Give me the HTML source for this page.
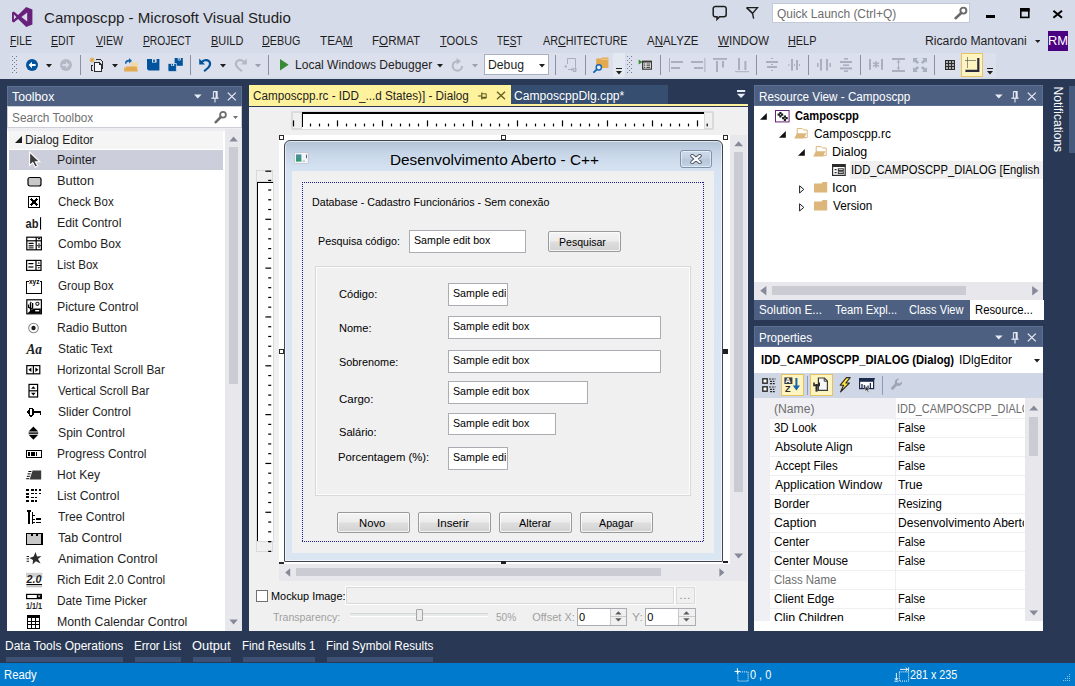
<!DOCTYPE html>
<html lang="en"><head><meta charset="utf-8"><title>Camposcpp - Microsoft Visual Studio</title>
<style>
html,body{margin:0;padding:0}
body{width:1075px;height:686px;overflow:hidden;position:relative;background:#293955;font-family:"Liberation Sans",sans-serif;font-size:12px}
#r{position:absolute;left:0;top:0;width:1075px;height:686px;overflow:hidden}
#r div,#r span,#r svg{position:absolute;box-sizing:content-box;white-space:nowrap}
#r span u{text-decoration:underline}
</style></head><body><div id="r">
<div style="left:0px;top:0px;width:1075px;height:79px;background:#d6dbe9;"></div>
<div style="left:10px;top:53px;width:603px;height:24px;background:#dce0ec;"></div>
<div style="left:613px;top:53px;width:12px;height:24px;background:#e4e8f1;"></div>
<div style="left:626px;top:53px;width:370px;height:24px;background:#dce0ec;"></div>
<span style="left:43.8px;top:8.30px;font-size:15px;line-height:19px;color:#1e1e1e;font-family:'Liberation Sans',sans-serif;transform-origin:0 0;transform:scaleX(1.0045);">Camposcpp - Microsoft Visual Studio</span>
<span style="left:10.22px;top:32.84px;font-size:12px;line-height:16px;color:#1e1e1e;font-family:'Liberation Sans',sans-serif;transform-origin:0 0;transform:scaleX(0.8661);"><u>F</u>ILE</span>
<span style="left:51.21px;top:32.84px;font-size:12px;line-height:16px;color:#1e1e1e;font-family:'Liberation Sans',sans-serif;transform-origin:0 0;transform:scaleX(0.8779);"><u>E</u>DIT</span>
<span style="left:96.0px;top:32.84px;font-size:12px;line-height:16px;color:#1e1e1e;font-family:'Liberation Sans',sans-serif;transform-origin:0 0;transform:scaleX(0.8824);"><u>V</u>IEW</span>
<span style="left:142.73px;top:32.84px;font-size:12px;line-height:16px;color:#1e1e1e;font-family:'Liberation Sans',sans-serif;transform-origin:0 0;transform:scaleX(0.8561);"><u>P</u>ROJECT</span>
<span style="left:210.68px;top:32.84px;font-size:12px;line-height:16px;color:#1e1e1e;font-family:'Liberation Sans',sans-serif;transform-origin:0 0;transform:scaleX(0.9145);"><u>B</u>UILD</span>
<span style="left:262.19px;top:32.84px;font-size:12px;line-height:16px;color:#1e1e1e;font-family:'Liberation Sans',sans-serif;transform-origin:0 0;transform:scaleX(0.8973);"><u>D</u>EBUG</span>
<span style="left:320.3px;top:32.84px;font-size:12px;line-height:16px;color:#1e1e1e;font-family:'Liberation Sans',sans-serif;transform-origin:0 0;transform:scaleX(0.9783);">TEA<u>M</u></span>
<span style="left:371.63px;top:32.84px;font-size:12px;line-height:16px;color:#1e1e1e;font-family:'Liberation Sans',sans-serif;transform-origin:0 0;transform:scaleX(0.9671);">F<u>O</u>RMAT</span>
<span style="left:439.81px;top:32.84px;font-size:12px;line-height:16px;color:#1e1e1e;font-family:'Liberation Sans',sans-serif;transform-origin:0 0;transform:scaleX(0.9296);"><u>T</u>OOLS</span>
<span style="left:497.33px;top:32.84px;font-size:12px;line-height:16px;color:#1e1e1e;font-family:'Liberation Sans',sans-serif;transform-origin:0 0;transform:scaleX(0.8278);">TE<u>S</u>T</span>
<span style="left:543.0px;top:32.84px;font-size:12px;line-height:16px;color:#1e1e1e;font-family:'Liberation Sans',sans-serif;transform-origin:0 0;transform:scaleX(0.8984);">AR<u>C</u>HITECTURE</span>
<span style="left:647.0px;top:32.84px;font-size:12px;line-height:16px;color:#1e1e1e;font-family:'Liberation Sans',sans-serif;transform-origin:0 0;transform:scaleX(0.9568);">A<u>N</u>ALYZE</span>
<span style="left:718.0px;top:32.84px;font-size:12px;line-height:16px;color:#1e1e1e;font-family:'Liberation Sans',sans-serif;transform-origin:0 0;transform:scaleX(0.9696);"><u>W</u>INDOW</span>
<span style="left:788.18px;top:32.84px;font-size:12px;line-height:16px;color:#1e1e1e;font-family:'Liberation Sans',sans-serif;transform-origin:0 0;transform:scaleX(0.9060);"><u>H</u>ELP</span>
<div style="left:772px;top:3px;width:196px;height:18px;background:#fff;border:1px solid #c4c9d8;"></div>
<span style="left:776.5px;top:5.84px;font-size:12px;line-height:16px;color:#6d6d6d;font-family:'Liberation Sans',sans-serif;transform-origin:0 0;transform:scaleX(0.9958);">Quick Launch (Ctrl+Q)</span>
<span style="left:925.09px;top:33.34px;font-size:12px;line-height:16px;color:#1e1e1e;font-family:'Liberation Sans',sans-serif;transform-origin:0 0;transform:scaleX(1.0163);">Ricardo Mantovani</span>
<div style="left:1048px;top:31px;width:20px;height:20px;background:#4b0082;"></div>
<span style="left:1047.91px;top:32.20px;font-size:13px;line-height:17px;color:#fff;font-family:'Liberation Sans',sans-serif;transform-origin:0 0;transform:scaleX(0.9945);">RM</span>
<span style="left:295.1px;top:56.84px;font-size:12px;line-height:16px;color:#1e1e1e;font-family:'Liberation Sans',sans-serif;transform-origin:0 0;transform:scaleX(1.0029);">Local Windows Debugger</span>
<div style="left:484.2px;top:54.4px;width:62.599999999999994px;height:18.6px;background:#fff;border:1px solid #a9afc0;"></div>
<span style="left:487.68px;top:56.84px;font-size:12px;line-height:16px;color:#1e1e1e;font-family:'Liberation Sans',sans-serif;transform-origin:0 0;transform:scaleX(1.0178);">Debug</span>
<div style="left:0px;top:662.5px;width:1075px;height:23.5px;background:#007acc;"></div>
<span style="left:3.66px;top:666.84px;font-size:12px;line-height:16px;color:#fff;font-family:'Liberation Sans',sans-serif;transform-origin:0 0;transform:scaleX(0.9379);">Ready</span>
<span style="left:750.34px;top:666.84px;font-size:12px;line-height:16px;color:#fff;font-family:'Liberation Sans',sans-serif;transform-origin:0 0;transform:scaleX(0.9115);">0 , 0</span>
<span style="left:909.76px;top:666.84px;font-size:12px;line-height:16px;color:#fff;font-family:'Liberation Sans',sans-serif;transform-origin:0 0;transform:scaleX(0.8953);">281 x 235</span>
<span style="left:5.1px;top:637.84px;font-size:12px;line-height:16px;color:#fff;font-family:'Liberation Sans',sans-serif;transform-origin:0 0;transform:scaleX(0.9983);">Data Tools Operations</span>
<div style="left:6px;top:657px;width:117px;height:5px;background:#3e5175;"></div>
<span style="left:134.13px;top:637.84px;font-size:12px;line-height:16px;color:#fff;font-family:'Liberation Sans',sans-serif;transform-origin:0 0;transform:scaleX(0.9644);">Error List</span>
<div style="left:135px;top:657px;width:46px;height:5px;background:#3e5175;"></div>
<span style="left:192.46px;top:637.84px;font-size:12px;line-height:16px;color:#fff;font-family:'Liberation Sans',sans-serif;transform-origin:0 0;transform:scaleX(1.0704);">Output</span>
<div style="left:193px;top:657px;width:38px;height:5px;background:#3e5175;"></div>
<span style="left:242.14px;top:637.84px;font-size:12px;line-height:16px;color:#fff;font-family:'Liberation Sans',sans-serif;transform-origin:0 0;transform:scaleX(0.9574);">Find Results 1</span>
<div style="left:243px;top:657px;width:72px;height:5px;background:#3e5175;"></div>
<span style="left:326.12px;top:637.84px;font-size:12px;line-height:16px;color:#fff;font-family:'Liberation Sans',sans-serif;transform-origin:0 0;transform:scaleX(0.9752);">Find Symbol Results</span>
<div style="left:327px;top:657px;width:106px;height:5px;background:#3e5175;"></div>
<div style="left:6.6px;top:86px;width:235.8px;height:545.2px;background:#fff;"></div>
<div style="left:6.6px;top:85.5px;width:235.8px;height:21.4px;background:#4d6082;box-shadow:inset 0 0 0 1px #5c7096"></div>
<span style="left:11.8px;top:88.84px;font-size:12px;line-height:16px;color:#fff;font-family:'Liberation Sans',sans-serif;transform-origin:0 0;transform:scaleX(1.0219);">Toolbox</span>
<div style="left:7px;top:107px;width:235.4px;height:24px;background:#eeeef2;"></div>
<div style="left:8px;top:107px;width:233.2px;height:20.4px;background:#fff;box-shadow:0 0 0 1px #ccced8"></div>
<span style="left:11.91px;top:109.84px;font-size:12px;line-height:16px;color:#717171;font-family:'Liberation Sans',sans-serif;transform-origin:0 0;transform:scaleX(0.9841);">Search Toolbox</span>
<div style="left:9px;top:130.7px;width:214px;height:18.3px;background:#f5f5f5;"></div>
<span style="left:25.1px;top:132.34px;font-size:12px;line-height:16px;color:#1e1e1e;font-family:'Liberation Sans',sans-serif;transform-origin:0 0;transform:scaleX(0.9985);">Dialog Editor</span>
<div style="left:9px;top:150px;width:214px;height:19.8px;background:#cccedb;"></div>
<span style="left:57.28px;top:152.34px;font-size:12px;line-height:16px;color:#1e1e1e;font-family:'Liberation Sans',sans-serif;transform-origin:0 0;transform:scaleX(1.0244);">Pointer</span>
<span style="left:57.24px;top:173.34px;font-size:12px;line-height:16px;color:#1e1e1e;font-family:'Liberation Sans',sans-serif;transform-origin:0 0;transform:scaleX(1.0697);">Button</span>
<span style="left:57.62px;top:194.34px;font-size:12px;line-height:16px;color:#1e1e1e;font-family:'Liberation Sans',sans-serif;transform-origin:0 0;transform:scaleX(0.9599);">Check Box</span>
<span style="left:57.27px;top:215.34px;font-size:12px;line-height:16px;color:#1e1e1e;font-family:'Liberation Sans',sans-serif;transform-origin:0 0;transform:scaleX(1.0279);">Edit Control</span>
<span style="left:57.6px;top:236.34px;font-size:12px;line-height:16px;color:#1e1e1e;font-family:'Liberation Sans',sans-serif;transform-origin:0 0;transform:scaleX(1.0048);">Combo Box</span>
<span style="left:57.33px;top:257.34px;font-size:12px;line-height:16px;color:#1e1e1e;font-family:'Liberation Sans',sans-serif;transform-origin:0 0;transform:scaleX(0.9640);">List Box</span>
<span style="left:57.62px;top:278.34px;font-size:12px;line-height:16px;color:#1e1e1e;font-family:'Liberation Sans',sans-serif;transform-origin:0 0;transform:scaleX(0.9700);">Group Box</span>
<span style="left:57.28px;top:299.34px;font-size:12px;line-height:16px;color:#1e1e1e;font-family:'Liberation Sans',sans-serif;transform-origin:0 0;transform:scaleX(1.0270);">Picture Control</span>
<span style="left:57.29px;top:320.34px;font-size:12px;line-height:16px;color:#1e1e1e;font-family:'Liberation Sans',sans-serif;transform-origin:0 0;transform:scaleX(1.0103);">Radio Button</span>
<span style="left:57.71px;top:341.34px;font-size:12px;line-height:16px;color:#1e1e1e;font-family:'Liberation Sans',sans-serif;transform-origin:0 0;transform:scaleX(0.9853);">Static Text</span>
<span style="left:57.31px;top:362.34px;font-size:12px;line-height:16px;color:#1e1e1e;font-family:'Liberation Sans',sans-serif;transform-origin:0 0;transform:scaleX(0.9861);">Horizontal Scroll Bar</span>
<span style="left:58.2px;top:383.34px;font-size:12px;line-height:16px;color:#1e1e1e;font-family:'Liberation Sans',sans-serif;transform-origin:0 0;transform:scaleX(0.9640);">Vertical Scroll Bar</span>
<span style="left:57.7px;top:404.34px;font-size:12px;line-height:16px;color:#1e1e1e;font-family:'Liberation Sans',sans-serif;transform-origin:0 0;transform:scaleX(1.0042);">Slider Control</span>
<span style="left:57.69px;top:425.34px;font-size:12px;line-height:16px;color:#1e1e1e;font-family:'Liberation Sans',sans-serif;transform-origin:0 0;transform:scaleX(1.0154);">Spin Control</span>
<span style="left:57.31px;top:446.34px;font-size:12px;line-height:16px;color:#1e1e1e;font-family:'Liberation Sans',sans-serif;transform-origin:0 0;transform:scaleX(0.9932);">Progress Control</span>
<span style="left:57.29px;top:467.34px;font-size:12px;line-height:16px;color:#1e1e1e;font-family:'Liberation Sans',sans-serif;transform-origin:0 0;transform:scaleX(1.0072);">Hot Key</span>
<span style="left:57.27px;top:488.34px;font-size:12px;line-height:16px;color:#1e1e1e;font-family:'Liberation Sans',sans-serif;transform-origin:0 0;transform:scaleX(1.0288);">List Control</span>
<span style="left:58.0px;top:509.34px;font-size:12px;line-height:16px;color:#1e1e1e;font-family:'Liberation Sans',sans-serif;transform-origin:0 0;transform:scaleX(1.0077);">Tree Control</span>
<span style="left:57.99px;top:530.34px;font-size:12px;line-height:16px;color:#1e1e1e;font-family:'Liberation Sans',sans-serif;transform-origin:0 0;transform:scaleX(1.0397);">Tab Control</span>
<span style="left:58.2px;top:551.34px;font-size:12px;line-height:16px;color:#1e1e1e;font-family:'Liberation Sans',sans-serif;transform-origin:0 0;transform:scaleX(1.0444);">Animation Control</span>
<span style="left:57.31px;top:572.34px;font-size:12px;line-height:16px;color:#1e1e1e;font-family:'Liberation Sans',sans-serif;transform-origin:0 0;transform:scaleX(0.9834);">Rich Edit 2.0 Control</span>
<span style="left:57.31px;top:593.34px;font-size:12px;line-height:16px;color:#1e1e1e;font-family:'Liberation Sans',sans-serif;transform-origin:0 0;transform:scaleX(0.9856);">Date Time Picker</span>
<span style="left:57.28px;top:614.34px;font-size:12px;line-height:16px;color:#1e1e1e;font-family:'Liberation Sans',sans-serif;transform-origin:0 0;transform:scaleX(1.0231);">Month Calendar Control</span>
<div style="left:225.3px;top:128.5px;width:17px;height:502.5px;background:#e8e8ec;"></div>
<div style="left:229px;top:147.2px;width:8.8px;height:237px;background:#cbccd3;"></div>
<div style="left:249px;top:85.2px;width:262px;height:20px;background:#fff29d;"></div>
<div style="left:249px;top:103.6px;width:499px;height:2.9px;background:#fff29d;"></div>
<span style="left:253.02px;top:87.94px;font-size:12px;line-height:16px;color:#1e1e1e;font-family:'Liberation Sans',sans-serif;transform-origin:0 0;transform:scaleX(0.9745);">Camposcpp.rc - IDD_...d States)] - Dialog</span>
<div style="left:511px;top:85.2px;width:157px;height:18.4px;background:#364e6f;"></div>
<span style="left:514.4px;top:87.94px;font-size:12px;line-height:16px;color:#fff;font-family:'Liberation Sans',sans-serif;transform-origin:0 0;transform:scaleX(1.0083);">CamposcppDlg.cpp*</span>
<div style="left:249px;top:106.5px;width:499px;height:524.8px;background:#f0f0f0;"></div>
<div style="left:291.5px;top:112.3px;width:421px;height:16.4px;background:#fff;box-shadow:0 0 0 0.6px #d0d0d0"></div>
<div style="left:302px;top:112.3px;width:402px;height:1.6px;background:#000;"></div>
<div style="left:301.8px;top:112.3px;width:1.5px;height:15px;background:#000;"></div>
<div style="left:291.5px;top:112.3px;width:8.5px;height:14.399999999999999px;background:#f0f0f0;border:1px solid #dadada;"></div>
<div style="left:704px;top:112.3px;width:6.6px;height:14.399999999999999px;background:#f0f0f0;border:1px solid #dadada;"></div>
<svg style="left:291.5px;top:112.3px;" width="421" height="17" viewBox="0 0 421 17"><rect x="17.90" y="11.60" width="1.2" height="2.8" fill="#000"/><rect x="26.90" y="11.60" width="1.2" height="2.8" fill="#000"/><rect x="35.90" y="11.60" width="1.2" height="2.8" fill="#000"/><rect x="44.90" y="8.40" width="1.2" height="6" fill="#000"/><rect x="53.90" y="11.60" width="1.2" height="2.8" fill="#000"/><rect x="62.90" y="11.60" width="1.2" height="2.8" fill="#000"/><rect x="71.90" y="11.60" width="1.2" height="2.8" fill="#000"/><rect x="80.90" y="11.60" width="1.2" height="2.8" fill="#000"/><rect x="89.90" y="8.40" width="1.2" height="6" fill="#000"/><rect x="98.90" y="11.60" width="1.2" height="2.8" fill="#000"/><rect x="107.90" y="11.60" width="1.2" height="2.8" fill="#000"/><rect x="116.90" y="11.60" width="1.2" height="2.8" fill="#000"/><rect x="125.90" y="11.60" width="1.2" height="2.8" fill="#000"/><rect x="134.90" y="8.40" width="1.2" height="6" fill="#000"/><rect x="143.90" y="11.60" width="1.2" height="2.8" fill="#000"/><rect x="152.90" y="11.60" width="1.2" height="2.8" fill="#000"/><rect x="161.90" y="11.60" width="1.2" height="2.8" fill="#000"/><rect x="170.90" y="11.60" width="1.2" height="2.8" fill="#000"/><rect x="179.90" y="8.40" width="1.2" height="6" fill="#000"/><rect x="188.90" y="11.60" width="1.2" height="2.8" fill="#000"/><rect x="197.90" y="11.60" width="1.2" height="2.8" fill="#000"/><rect x="206.90" y="11.60" width="1.2" height="2.8" fill="#000"/><rect x="215.90" y="11.60" width="1.2" height="2.8" fill="#000"/><rect x="224.90" y="8.40" width="1.2" height="6" fill="#000"/><rect x="233.90" y="11.60" width="1.2" height="2.8" fill="#000"/><rect x="242.90" y="11.60" width="1.2" height="2.8" fill="#000"/><rect x="251.90" y="11.60" width="1.2" height="2.8" fill="#000"/><rect x="260.90" y="11.60" width="1.2" height="2.8" fill="#000"/><rect x="269.90" y="8.40" width="1.2" height="6" fill="#000"/><rect x="278.90" y="11.60" width="1.2" height="2.8" fill="#000"/><rect x="287.90" y="11.60" width="1.2" height="2.8" fill="#000"/><rect x="296.90" y="11.60" width="1.2" height="2.8" fill="#000"/><rect x="305.90" y="11.60" width="1.2" height="2.8" fill="#000"/><rect x="314.90" y="8.40" width="1.2" height="6" fill="#000"/><rect x="323.90" y="11.60" width="1.2" height="2.8" fill="#000"/><rect x="332.90" y="11.60" width="1.2" height="2.8" fill="#000"/><rect x="341.90" y="11.60" width="1.2" height="2.8" fill="#000"/><rect x="350.90" y="11.60" width="1.2" height="2.8" fill="#000"/><rect x="359.90" y="8.40" width="1.2" height="6" fill="#000"/><rect x="368.90" y="11.60" width="1.2" height="2.8" fill="#000"/><rect x="377.90" y="11.60" width="1.2" height="2.8" fill="#000"/><rect x="386.90" y="11.60" width="1.2" height="2.8" fill="#000"/><rect x="395.90" y="11.60" width="1.2" height="2.8" fill="#000"/><rect x="404.90" y="8.40" width="1.2" height="6" fill="#000"/><rect x="0.9" y="8.4" width="1.2" height="6" fill="#000"/><rect x="414.6" y="11.6" width="1.2" height="2.8" fill="#000"/></svg>
<div style="left:279px;top:135px;width:451px;height:429px;background:#fff;"></div>
<div style="left:729.8px;top:135px;width:16.9px;height:446px;background:#e8e8ec;"></div>
<div style="left:734.3px;top:152px;width:8.7px;height:340px;background:#cbccd3;"></div>
<svg style="left:734px;top:141px;" width="10" height="6" viewBox="0 0 10 6"><path d="M0.2 5.2L4.6 0.2L9 5.2Z" fill="#868999"/></svg>
<svg style="left:734px;top:552.6px;" width="10" height="6" viewBox="0 0 10 6"><path d="M0.2 0.4L4.6 5.4L9 0.4Z" fill="#868999"/></svg>
<div style="left:279px;top:564px;width:451px;height:17px;background:#e8e8ec;"></div>
<div style="left:296px;top:568.3px;width:365px;height:8.2px;background:#cbccd3;"></div>
<svg style="left:285px;top:568px;" width="6" height="9" viewBox="0 0 6 9"><path d="M5.2 0.2V8.8L0.2 4.5Z" fill="#868999"/></svg>
<svg style="left:718.6px;top:568px;" width="6" height="9" viewBox="0 0 6 9"><path d="M0.4 0.2V8.8L5.4 4.5Z" fill="#868999"/></svg>
<div style="left:257px;top:181.8px;width:15.6px;height:359px;background:#fff;box-shadow:0 0 0 0.6px #d0d0d0"></div>
<div style="left:257px;top:181.8px;width:1.4px;height:359px;background:#000;"></div>
<div style="left:257px;top:181.6px;width:15.6px;height:1.3px;background:#000;"></div>
<div style="left:256.4px;top:170.3px;width:14.399999999999999px;height:9.5px;background:#f0f0f0;border:1px solid #dadada;"></div>
<div style="left:256.4px;top:540.7px;width:14.399999999999999px;height:9px;background:#f0f0f0;border:1px solid #dadada;"></div>
<svg style="left:257px;top:170px;" width="16" height="383" viewBox="0 0 16 383"><rect x="11.20" y="19.40" width="3" height="1.2" fill="#000"/><rect x="11.20" y="29.17" width="3" height="1.2" fill="#000"/><rect x="11.20" y="38.93" width="3" height="1.2" fill="#000"/><rect x="8.40" y="48.70" width="5.8" height="1.2" fill="#000"/><rect x="11.20" y="58.47" width="3" height="1.2" fill="#000"/><rect x="11.20" y="68.23" width="3" height="1.2" fill="#000"/><rect x="11.20" y="78.00" width="3" height="1.2" fill="#000"/><rect x="11.20" y="87.76" width="3" height="1.2" fill="#000"/><rect x="8.40" y="97.53" width="5.8" height="1.2" fill="#000"/><rect x="11.20" y="107.30" width="3" height="1.2" fill="#000"/><rect x="11.20" y="117.06" width="3" height="1.2" fill="#000"/><rect x="11.20" y="126.83" width="3" height="1.2" fill="#000"/><rect x="11.20" y="136.59" width="3" height="1.2" fill="#000"/><rect x="8.40" y="146.36" width="5.8" height="1.2" fill="#000"/><rect x="11.20" y="156.13" width="3" height="1.2" fill="#000"/><rect x="11.20" y="165.89" width="3" height="1.2" fill="#000"/><rect x="11.20" y="175.66" width="3" height="1.2" fill="#000"/><rect x="11.20" y="185.42" width="3" height="1.2" fill="#000"/><rect x="8.40" y="195.19" width="5.8" height="1.2" fill="#000"/><rect x="11.20" y="204.96" width="3" height="1.2" fill="#000"/><rect x="11.20" y="214.72" width="3" height="1.2" fill="#000"/><rect x="11.20" y="224.49" width="3" height="1.2" fill="#000"/><rect x="11.20" y="234.25" width="3" height="1.2" fill="#000"/><rect x="8.40" y="244.02" width="5.8" height="1.2" fill="#000"/><rect x="11.20" y="253.79" width="3" height="1.2" fill="#000"/><rect x="11.20" y="263.55" width="3" height="1.2" fill="#000"/><rect x="11.20" y="273.32" width="3" height="1.2" fill="#000"/><rect x="11.20" y="283.08" width="3" height="1.2" fill="#000"/><rect x="8.40" y="292.85" width="5.8" height="1.2" fill="#000"/><rect x="11.20" y="302.62" width="3" height="1.2" fill="#000"/><rect x="11.20" y="312.38" width="3" height="1.2" fill="#000"/><rect x="11.20" y="322.15" width="3" height="1.2" fill="#000"/><rect x="11.20" y="331.91" width="3" height="1.2" fill="#000"/><rect x="8.40" y="341.68" width="5.8" height="1.2" fill="#000"/><rect x="11.20" y="351.45" width="3" height="1.2" fill="#000"/><rect x="11.20" y="361.21" width="3" height="1.2" fill="#000"/><rect x="11.20" y="370.98" width="3" height="1.2" fill="#000"/><rect x="8.4" y="0.6" width="5.8" height="1.2" fill="#000"/><rect x="11.2" y="9.8" width="3" height="1.2" fill="#000"/><rect x="11.2" y="371" width="3" height="1.2" fill="#000"/><rect x="11.2" y="380.8" width="3" height="1.2" fill="#000"/></svg>
<div style="left:284.2px;top:140.2px;width:436.6px;height:419.6px;background:linear-gradient(#b3c4d7,#c9d8e9 14px,#d6e3f2 30px,#d9e5f3 60px,#dbe6f3);border:1px solid #3f4550;border-radius:6px 6px 1px 1px;box-shadow:inset 0 0 0 1px rgba(255,255,255,0.55)"></div>
<div style="left:292px;top:171px;width:421.7px;height:382px;background:#f0f0f0;"></div>
<span style="left:389.77px;top:150.30px;font-size:15px;line-height:19px;color:#000;font-family:'Liberation Sans',sans-serif;transform-origin:0 0;transform:scaleX(1.0227);">Desenvolvimento Aberto - C++</span>
<svg style="left:293.8px;top:152.3px;" width="15" height="12" viewBox="0 0 15 12"><defs><linearGradient id="tg" x1="0" y1="0" x2="0" y2="1"><stop offset="0" stop-color="#4f8ea8"/><stop offset="1" stop-color="#2f9a6a"/></linearGradient></defs><rect x="0.4" y="0.4" width="14" height="11.2" rx="1.2" fill="#f3f5f8" stroke="#b9c2cf" stroke-width="0.8"/><rect x="2" y="2.4" width="5.4" height="7.2" fill="url(#tg)"/><rect x="8.4" y="8.6" width="2.6" height="1" fill="#a8b0bc"/><rect x="12" y="2.6" width="1" height="3.6" fill="#5a6573"/></svg>
<div style="left:680.2px;top:150px;width:29.6px;height:15.8px;border:1px solid #7f92ab;border-radius:3px;background:linear-gradient(#cfdbe9,#bfcee0 50%,#b6c7db 50%,#c3d2e3);box-shadow:inset 0 0 0 1px rgba(255,255,255,0.5)"></div>
<svg style="left:689.5px;top:153.5px;" width="12" height="10" viewBox="0 0 12 10"><path d="M2.2 1.8L9.8 8.2M9.8 1.8L2.2 8.2" stroke="#47505e" stroke-width="3.8" stroke-linecap="round"/><path d="M2.2 1.8L9.8 8.2M9.8 1.8L2.2 8.2" stroke="#fff" stroke-width="2.1" stroke-linecap="round"/></svg>
<div style="left:278.8px;top:135px;width:3.2px;height:3.2px;background:#fff;border:1px solid #2b2b2b;"></div>
<div style="left:500.8px;top:135px;width:3.2px;height:3.2px;background:#fff;border:1px solid #2b2b2b;"></div>
<div style="left:723px;top:135px;width:3.2px;height:3.2px;background:#fff;border:1px solid #2b2b2b;"></div>
<div style="left:278.8px;top:348.8px;width:3.2px;height:3.2px;background:#fff;border:1px solid #2b2b2b;"></div>
<div style="left:723px;top:348.8px;width:5.2px;height:5.2px;background:#1e1e1e;"></div>
<div style="left:278.8px;top:562px;width:5.2px;height:2px;background:#2b2b2b;"></div>
<div style="left:500.8px;top:561.4px;width:5.2px;height:2.6px;background:#1e1e1e;"></div>
<div style="left:722.9px;top:561px;width:5.2px;height:2.4px;background:#1e1e1e;"></div>
<svg style="left:302px;top:182px;" width="403" height="361" viewBox="0 0 403 361"><g stroke="#1a1a8c" stroke-width="1" stroke-dasharray="1 1"><path d="M0 0.5H402"/><path d="M0 359.5H402"/><path d="M0.5 0V360"/><path d="M401.5 0V360"/></g></svg>
<span style="left:311.73px;top:194.69px;font-size:11px;line-height:15px;color:#000;font-family:'Liberation Sans',sans-serif;transform-origin:0 0;transform:scaleX(0.9708);">Database - Cadastro Funcionários - Sem conexão</span>
<span style="left:317.52px;top:233.69px;font-size:11px;line-height:15px;color:#000;font-family:'Liberation Sans',sans-serif;transform-origin:0 0;transform:scaleX(0.9780);">Pesquisa código:</span>
<div style="left:409px;top:230px;width:115px;height:21px;background:#fff;border:1px solid #abadb3;"></div>
<div style="left:414.02px;top:232.69px;width:110.0px;height:15px;overflow:hidden"><span style="left:0;top:0;font-size:11px;line-height:15px;color:#000;font-family:'Liberation Sans',sans-serif;transform-origin:0 0;transform:scaleX(0.9681);">Sample edit box</span></div>
<div style="left:548px;top:231.4px;width:71.2px;height:19px;border:1px solid #999a9a;border-radius:2px;background:linear-gradient(#f4f4f4,#ececec 48%,#dedede 52%,#d2d2d2);box-shadow:inset 0 0 0 1px rgba(255,255,255,0.75)"></div>
<span style="left:559.44px;top:235.09px;font-size:11px;line-height:15px;color:#000;font-family:'Liberation Sans',sans-serif;transform-origin:0 0;transform:scaleX(0.9582);">Pesquisar</span>
<div style="left:315px;top:266px;width:373.5px;height:227.5px;background:transparent;border:1px solid #d9d9d9;box-shadow:inset 0 0 0 1px rgba(255,255,255,0.8)"></div>
<span style="left:338.9px;top:287.39px;font-size:11px;line-height:15px;color:#000;font-family:'Liberation Sans',sans-serif;transform-origin:0 0;transform:scaleX(1.0082);">Código:</span>
<span style="left:338.5px;top:321.19px;font-size:11px;line-height:15px;color:#000;font-family:'Liberation Sans',sans-serif;transform-origin:0 0;transform:scaleX(1.0033);">Nome:</span>
<span style="left:338.91px;top:355.19px;font-size:11px;line-height:15px;color:#000;font-family:'Liberation Sans',sans-serif;transform-origin:0 0;transform:scaleX(0.9880);">Sobrenome:</span>
<span style="left:338.88px;top:391.69px;font-size:11px;line-height:15px;color:#000;font-family:'Liberation Sans',sans-serif;transform-origin:0 0;transform:scaleX(1.0411);">Cargo:</span>
<span style="left:338.9px;top:424.69px;font-size:11px;line-height:15px;color:#000;font-family:'Liberation Sans',sans-serif;transform-origin:0 0;transform:scaleX(1.0084);">Salário:</span>
<span style="left:338.47px;top:450.49px;font-size:11px;line-height:15px;color:#000;font-family:'Liberation Sans',sans-serif;transform-origin:0 0;transform:scaleX(1.0288);">Porcentagem (%):</span>
<div style="left:448.3px;top:283px;width:57.6px;height:21px;background:#fff;border:1px solid #abadb3;"></div>
<div style="left:453.32px;top:285.69px;width:52.6px;height:15px;overflow:hidden"><span style="left:0;top:0;font-size:11px;line-height:15px;color:#000;font-family:'Liberation Sans',sans-serif;transform-origin:0 0;transform:scaleX(0.9681);">Sample edit box</span></div>
<div style="left:448.3px;top:316.3px;width:211px;height:20.6px;background:#fff;border:1px solid #abadb3;"></div>
<div style="left:453.32px;top:318.99px;width:206.0px;height:15px;overflow:hidden"><span style="left:0;top:0;font-size:11px;line-height:15px;color:#000;font-family:'Liberation Sans',sans-serif;transform-origin:0 0;transform:scaleX(0.9681);">Sample edit box</span></div>
<div style="left:448.3px;top:350px;width:211px;height:20.8px;background:#fff;border:1px solid #abadb3;"></div>
<div style="left:453.32px;top:352.69px;width:206.0px;height:15px;overflow:hidden"><span style="left:0;top:0;font-size:11px;line-height:15px;color:#000;font-family:'Liberation Sans',sans-serif;transform-origin:0 0;transform:scaleX(0.9681);">Sample edit box</span></div>
<div style="left:448.3px;top:381.2px;width:137.4px;height:20.8px;background:#fff;border:1px solid #abadb3;"></div>
<div style="left:453.32px;top:383.89px;width:132.4px;height:15px;overflow:hidden"><span style="left:0;top:0;font-size:11px;line-height:15px;color:#000;font-family:'Liberation Sans',sans-serif;transform-origin:0 0;transform:scaleX(0.9681);">Sample edit box</span></div>
<div style="left:448.3px;top:413.3px;width:105.8px;height:20px;background:#fff;border:1px solid #abadb3;"></div>
<div style="left:453.32px;top:415.99px;width:100.8px;height:15px;overflow:hidden"><span style="left:0;top:0;font-size:11px;line-height:15px;color:#000;font-family:'Liberation Sans',sans-serif;transform-origin:0 0;transform:scaleX(0.9681);">Sample edit box</span></div>
<div style="left:448.3px;top:447px;width:57.6px;height:20.8px;background:#fff;border:1px solid #abadb3;"></div>
<div style="left:453.32px;top:449.69px;width:52.6px;height:15px;overflow:hidden"><span style="left:0;top:0;font-size:11px;line-height:15px;color:#000;font-family:'Liberation Sans',sans-serif;transform-origin:0 0;transform:scaleX(0.9681);">Sample edit box</span></div>
<div style="left:336.8px;top:512.4px;width:71.2px;height:18.6px;border:1px solid #999a9a;border-radius:2px;background:linear-gradient(#f4f4f4,#ececec 48%,#dedede 52%,#d2d2d2);box-shadow:inset 0 0 0 1px rgba(255,255,255,0.75)"></div>
<span style="left:359.08px;top:516.09px;font-size:11px;line-height:15px;color:#000;font-family:'Liberation Sans',sans-serif;transform-origin:0 0;transform:scaleX(1.0246);">Novo</span>
<div style="left:418px;top:512.4px;width:71px;height:18.6px;border:1px solid #999a9a;border-radius:2px;background:linear-gradient(#f4f4f4,#ececec 48%,#dedede 52%,#d2d2d2);box-shadow:inset 0 0 0 1px rgba(255,255,255,0.75)"></div>
<span style="left:437.35px;top:516.09px;font-size:11px;line-height:15px;color:#000;font-family:'Liberation Sans',sans-serif;transform-origin:0 0;transform:scaleX(1.0510);">Inserir</span>
<div style="left:499.2px;top:512.4px;width:71px;height:18.6px;border:1px solid #999a9a;border-radius:2px;background:linear-gradient(#f4f4f4,#ececec 48%,#dedede 52%,#d2d2d2);box-shadow:inset 0 0 0 1px rgba(255,255,255,0.75)"></div>
<span style="left:519.0px;top:516.09px;font-size:11px;line-height:15px;color:#000;font-family:'Liberation Sans',sans-serif;transform-origin:0 0;transform:scaleX(0.9938);">Alterar</span>
<div style="left:580px;top:512.4px;width:71px;height:18.6px;border:1px solid #999a9a;border-radius:2px;background:linear-gradient(#f4f4f4,#ececec 48%,#dedede 52%,#d2d2d2);box-shadow:inset 0 0 0 1px rgba(255,255,255,0.75)"></div>
<span style="left:599.0px;top:516.09px;font-size:11px;line-height:15px;color:#000;font-family:'Liberation Sans',sans-serif;transform-origin:0 0;transform:scaleX(0.9717);">Apagar</span>
<div style="left:255.5px;top:589.8px;width:10.2px;height:10.2px;background:#fff;border:1px solid #707070;"></div>
<span style="left:270.51px;top:589.29px;font-size:11px;line-height:15px;color:#000;font-family:'Liberation Sans',sans-serif;transform-origin:0 0;transform:scaleX(0.9905);">Mockup Image:</span>
<div style="left:346.4px;top:587px;width:325.2px;height:14.8px;background:#f0f0f0;border:1px solid #d9d9d9;box-shadow:0 0 0 1px #fff"></div>
<div style="left:675.5px;top:587.2px;width:17.2px;height:14.600000000000001px;background:#f0f0f0;border:1px solid #d9d9d9;box-shadow:0 0 0 1px #f8f8f8"></div>
<span style="left:272.81px;top:609.69px;font-size:11px;line-height:15px;color:#a0a0a0;font-family:'Liberation Sans',sans-serif;transform-origin:0 0;transform:scaleX(0.9607);">Transparency:</span>
<div style="left:350px;top:613px;width:138px;height:1px;background:#d6d6d6;"></div>
<div style="left:350px;top:614px;width:138px;height:1.6px;background:#e7eaea;"></div>
<div style="left:350px;top:615.6px;width:138px;height:0.8px;background:#fff;"></div>
<div style="left:415.6px;top:609px;width:5px;height:10.4px;background:#ececec;border:1px solid #a6a6a6;border-radius:1px"></div>
<span style="left:496.03px;top:609.69px;font-size:11px;line-height:15px;color:#a0a0a0;font-family:'Liberation Sans',sans-serif;transform-origin:0 0;transform:scaleX(0.9151);">50%</span>
<span style="left:532.2px;top:609.69px;font-size:11px;line-height:15px;color:#a0a0a0;font-family:'Liberation Sans',sans-serif;transform-origin:0 0;transform:scaleX(1.0000);">Offset X:</span>
<div style="left:577.2px;top:607.6px;width:48px;height:16px;background:#fff;border:1px solid #abadb3;"></div>
<span style="left:579.1px;top:609.69px;font-size:11px;line-height:15px;color:#000;font-family:'Liberation Sans',sans-serif;">0</span>
<span style="left:631.78px;top:609.69px;font-size:11px;line-height:15px;color:#a0a0a0;font-family:'Liberation Sans',sans-serif;transform-origin:0 0;transform:scaleX(1.1047);">Y:</span>
<div style="left:644.5px;top:607.6px;width:49px;height:16px;background:#fff;border:1px solid #abadb3;"></div>
<span style="left:647.3px;top:609.69px;font-size:11px;line-height:15px;color:#000;font-family:'Liberation Sans',sans-serif;">0</span>
<div style="left:753.8px;top:86px;width:289.7px;height:233.5px;background:#fff;"></div>
<div style="left:753.8px;top:85.3px;width:289.7px;height:21.1px;background:#4d6082;box-shadow:inset 0 0 0 1px #5c7096"></div>
<span style="left:758.62px;top:88.84px;font-size:12px;line-height:16px;color:#fff;font-family:'Liberation Sans',sans-serif;transform-origin:0 0;transform:scaleX(0.9753);">Resource View - Camposcpp</span>
<span style="left:794.63px;top:107.84px;font-size:12px;line-height:16px;color:#000;font-weight:bold;font-family:'Liberation Sans',sans-serif;transform-origin:0 0;transform:scaleX(0.9292);">Camposcpp</span>
<span style="left:813.9px;top:125.84px;font-size:12px;line-height:16px;color:#000;font-family:'Liberation Sans',sans-serif;transform-origin:0 0;transform:scaleX(0.9935);">Camposcpp.rc</span>
<span style="left:832.07px;top:143.84px;font-size:12px;line-height:16px;color:#000;font-family:'Liberation Sans',sans-serif;transform-origin:0 0;transform:scaleX(1.0372);">Dialog</span>
<div style="left:850px;top:161px;width:193px;height:18px;background:#f0f0f0;"></div>
<div style="left:850.67px;top:162.34px;width:191.3px;height:16px;overflow:hidden"><span style="left:0;top:0;font-size:12px;line-height:16px;color:#000;font-family:'Liberation Sans',sans-serif;transform-origin:0 0;transform:scaleX(0.9321);">IDD_CAMPOSCPP_DIALOG [English</span></div>
<span style="left:831.81px;top:180.34px;font-size:12px;line-height:16px;color:#000;font-family:'Liberation Sans',sans-serif;transform-origin:0 0;transform:scaleX(1.0817);">Icon</span>
<span style="left:833.0px;top:198.34px;font-size:12px;line-height:16px;color:#000;font-family:'Liberation Sans',sans-serif;transform-origin:0 0;transform:scaleX(0.9796);">Version</span>
<div style="left:753.8px;top:282px;width:289.7px;height:17.5px;background:#e8e8ec;"></div>
<div style="left:772px;top:286px;width:194px;height:9px;background:#cbccd3;"></div>
<div style="left:753.8px;top:299.5px;width:289.7px;height:20.1px;background:#4d6082;"></div>
<div style="left:970px;top:299.5px;width:73.5px;height:20.1px;background:#fff;"></div>
<span style="left:759.01px;top:301.64px;font-size:12px;line-height:16px;color:#fff;font-family:'Liberation Sans',sans-serif;transform-origin:0 0;transform:scaleX(0.9731);">Solution E...</span>
<span style="left:834.81px;top:301.64px;font-size:12px;line-height:16px;color:#fff;font-family:'Liberation Sans',sans-serif;transform-origin:0 0;transform:scaleX(0.9414);">Team Expl...</span>
<span style="left:908.95px;top:301.64px;font-size:12px;line-height:16px;color:#fff;font-family:'Liberation Sans',sans-serif;transform-origin:0 0;transform:scaleX(0.9215);">Class View</span>
<span style="left:974.65px;top:301.64px;font-size:12px;line-height:16px;color:#000;font-family:'Liberation Sans',sans-serif;transform-origin:0 0;transform:scaleX(0.9428);">Resource...</span>
<div style="left:754.4px;top:327px;width:289.1px;height:304px;background:#fff;"></div>
<div style="left:754.4px;top:326px;width:289.1px;height:21.4px;background:#4d6082;box-shadow:inset 0 0 0 1px #5c7096"></div>
<span style="left:758.93px;top:329.64px;font-size:12px;line-height:16px;color:#fff;font-family:'Liberation Sans',sans-serif;transform-origin:0 0;transform:scaleX(0.9682);">Properties</span>
<span style="left:760.95px;top:351.64px;font-size:12px;line-height:16px;color:#000;font-weight:bold;font-family:'Liberation Sans',sans-serif;transform-origin:0 0;transform:scaleX(0.9374);">IDD_CAMPOSCPP_DIALOG (Dialog)</span>
<span style="left:959.3px;top:351.84px;font-size:12px;line-height:16px;color:#000;font-family:'Liberation Sans',sans-serif;transform-origin:0 0;transform:scaleX(1.0039);">IDlgEditor</span>
<div style="left:754.4px;top:373px;width:289.1px;height:25px;background:#cfd6e5;"></div>
<div style="left:754.4px;top:398px;width:15.6px;height:223px;background:#f0f0f4;"></div>
<div style="left:770px;top:398px;width:124.5px;height:20.6px;background:#f0f0f4;"></div>
<span style="left:773.89px;top:401.14px;font-size:12px;line-height:16px;color:#6d6d6d;font-family:'Liberation Sans',sans-serif;transform-origin:0 0;transform:scaleX(1.0104);">(Name)</span>
<div style="left:897.4px;top:401.14px;width:126.3px;height:16px;overflow:hidden"><span style="left:0;top:0;font-size:12px;line-height:16px;color:#6d6d6d;font-family:'Liberation Sans',sans-serif;transform-origin:0 0;transform:scaleX(0.9080);">IDD_CAMPOSCPP_DIALOG</span></div>
<div style="left:770px;top:418.3px;width:255px;height:1px;background:#efeff2;"></div>
<span style="left:774.22px;top:420.09px;font-size:12px;line-height:16px;color:#000;font-family:'Liberation Sans',sans-serif;transform-origin:0 0;transform:scaleX(0.9527);">3D Look</span>
<div style="left:897.57px;top:420.09px;width:126.3px;height:16px;overflow:hidden"><span style="left:0;top:0;font-size:12px;line-height:16px;color:#000;font-family:'Liberation Sans',sans-serif;transform-origin:0 0;transform:scaleX(0.9250);">False</span></div>
<div style="left:770px;top:437.25px;width:255px;height:1px;background:#efeff2;"></div>
<span style="left:774.6px;top:439.04px;font-size:12px;line-height:16px;color:#000;font-family:'Liberation Sans',sans-serif;transform-origin:0 0;transform:scaleX(1.0199);">Absolute Align</span>
<div style="left:897.57px;top:439.04px;width:126.3px;height:16px;overflow:hidden"><span style="left:0;top:0;font-size:12px;line-height:16px;color:#000;font-family:'Liberation Sans',sans-serif;transform-origin:0 0;transform:scaleX(0.9250);">False</span></div>
<div style="left:770px;top:456.2px;width:255px;height:1px;background:#efeff2;"></div>
<span style="left:774.6px;top:457.99px;font-size:12px;line-height:16px;color:#000;font-family:'Liberation Sans',sans-serif;transform-origin:0 0;transform:scaleX(0.9600);">Accept Files</span>
<div style="left:897.57px;top:457.99px;width:126.3px;height:16px;overflow:hidden"><span style="left:0;top:0;font-size:12px;line-height:16px;color:#000;font-family:'Liberation Sans',sans-serif;transform-origin:0 0;transform:scaleX(0.9250);">False</span></div>
<div style="left:770px;top:475.15px;width:255px;height:1px;background:#efeff2;"></div>
<span style="left:774.6px;top:476.94px;font-size:12px;line-height:16px;color:#000;font-family:'Liberation Sans',sans-serif;transform-origin:0 0;transform:scaleX(1.0229);">Application Window</span>
<div style="left:898.2px;top:476.94px;width:126.3px;height:16px;overflow:hidden"><span style="left:0;top:0;font-size:12px;line-height:16px;color:#000;font-family:'Liberation Sans',sans-serif;transform-origin:0 0;transform:scaleX(1.0169);">True</span></div>
<div style="left:770px;top:494.1px;width:255px;height:1px;background:#efeff2;"></div>
<span style="left:773.71px;top:495.89px;font-size:12px;line-height:16px;color:#000;font-family:'Liberation Sans',sans-serif;transform-origin:0 0;transform:scaleX(0.9857);">Border</span>
<div style="left:897.54px;top:495.89px;width:126.3px;height:16px;overflow:hidden"><span style="left:0;top:0;font-size:12px;line-height:16px;color:#000;font-family:'Liberation Sans',sans-serif;transform-origin:0 0;transform:scaleX(0.9526);">Resizing</span></div>
<div style="left:770px;top:513.05px;width:255px;height:1px;background:#efeff2;"></div>
<span style="left:773.99px;top:514.84px;font-size:12px;line-height:16px;color:#000;font-family:'Liberation Sans',sans-serif;transform-origin:0 0;transform:scaleX(1.0225);">Caption</span>
<div style="left:897.5px;top:514.84px;width:126.3px;height:16px;overflow:hidden"><span style="left:0;top:0;font-size:12px;line-height:16px;color:#000;font-family:'Liberation Sans',sans-serif;transform-origin:0 0;transform:scaleX(1.0041);">Desenvolvimento Aberto - C++</span></div>
<div style="left:770px;top:532.0px;width:255px;height:1px;background:#efeff2;"></div>
<span style="left:774.01px;top:533.79px;font-size:12px;line-height:16px;color:#000;font-family:'Liberation Sans',sans-serif;transform-origin:0 0;transform:scaleX(0.9773);">Center</span>
<div style="left:897.57px;top:533.79px;width:126.3px;height:16px;overflow:hidden"><span style="left:0;top:0;font-size:12px;line-height:16px;color:#000;font-family:'Liberation Sans',sans-serif;transform-origin:0 0;transform:scaleX(0.9250);">False</span></div>
<div style="left:770px;top:550.95px;width:255px;height:1px;background:#efeff2;"></div>
<span style="left:774.01px;top:552.74px;font-size:12px;line-height:16px;color:#000;font-family:'Liberation Sans',sans-serif;transform-origin:0 0;transform:scaleX(0.9838);">Center Mouse</span>
<div style="left:897.57px;top:552.74px;width:126.3px;height:16px;overflow:hidden"><span style="left:0;top:0;font-size:12px;line-height:16px;color:#000;font-family:'Liberation Sans',sans-serif;transform-origin:0 0;transform:scaleX(0.9250);">False</span></div>
<div style="left:770px;top:569.9px;width:255px;height:1px;background:#efeff2;"></div>
<span style="left:774.03px;top:571.69px;font-size:12px;line-height:16px;color:#6d6d6d;font-family:'Liberation Sans',sans-serif;transform-origin:0 0;transform:scaleX(0.9549);">Class Name</span>
<div style="left:770px;top:588.85px;width:255px;height:1px;background:#efeff2;"></div>
<span style="left:774.02px;top:590.64px;font-size:12px;line-height:16px;color:#000;font-family:'Liberation Sans',sans-serif;transform-origin:0 0;transform:scaleX(0.9689);">Client Edge</span>
<div style="left:897.57px;top:590.64px;width:126.3px;height:16px;overflow:hidden"><span style="left:0;top:0;font-size:12px;line-height:16px;color:#000;font-family:'Liberation Sans',sans-serif;transform-origin:0 0;transform:scaleX(0.9250);">False</span></div>
<div style="left:770px;top:607.8px;width:255px;height:1px;background:#efeff2;"></div>
<span style="left:773.99px;top:609.59px;font-size:12px;line-height:16px;color:#000;font-family:'Liberation Sans',sans-serif;transform-origin:0 0;transform:scaleX(1.0163);">Clip Children</span>
<div style="left:897.57px;top:609.59px;width:126.3px;height:16px;overflow:hidden"><span style="left:0;top:0;font-size:12px;line-height:16px;color:#000;font-family:'Liberation Sans',sans-serif;transform-origin:0 0;transform:scaleX(0.9250);">False</span></div>
<div style="left:770px;top:626.75px;width:255px;height:1px;background:#efeff2;"></div>
<div style="left:894.5px;top:398px;width:1px;height:223px;background:#efeff2;"></div>
<div style="left:1025.3px;top:398px;width:17.7px;height:223px;background:#e8e8ec;"></div>
<div style="left:1029.4px;top:416.5px;width:8.6px;height:39px;background:#cbccd3;"></div>
<div style="left:754.4px;top:621px;width:289.1px;height:10px;background:#fff;"></div>
<div style="left:755px;top:631px;width:289px;height:31px;background:#293955;"></div>
<span style="left:0;top:0;font-size:13px;line-height:17px;color:#fff;transform-origin:0 0;transform:translate(1066.7px,86.6px) rotate(90deg) scaleX(0.9251)">Notifications</span>
<div style="left:1069px;top:85.5px;width:6px;height:67.5px;background:#465a7d;"></div>
<svg style="left:12px;top:7px;" width="21" height="20" viewBox="0 0 21 20"><path fill-rule="evenodd" fill="#68217a" d="M0 5.6L1.9 4.6L6.1 8L14.2 0L20.4 2.5V17.5L14.2 20L6.1 12L1.9 15.4L0 14.4Z M1.9 7.4V12.6L4.4 10Z M15.2 5.6V14.4L9.4 10Z"/></svg>
<svg style="left:12px;top:56px;" width="6" height="18" viewBox="0 0 6 18"><rect x="0" y="0" width="1" height="1" fill="#6d7a96"/><rect x="4" y="0" width="1" height="1" fill="#6d7a96"/><rect x="2" y="2" width="1" height="1" fill="#6d7a96"/><rect x="2" y="2" width="1" height="1" fill="#6d7a96"/><rect x="0" y="4" width="1" height="1" fill="#6d7a96"/><rect x="4" y="4" width="1" height="1" fill="#6d7a96"/><rect x="2" y="6" width="1" height="1" fill="#6d7a96"/><rect x="2" y="6" width="1" height="1" fill="#6d7a96"/><rect x="0" y="8" width="1" height="1" fill="#6d7a96"/><rect x="4" y="8" width="1" height="1" fill="#6d7a96"/><rect x="2" y="10" width="1" height="1" fill="#6d7a96"/><rect x="2" y="10" width="1" height="1" fill="#6d7a96"/><rect x="0" y="12" width="1" height="1" fill="#6d7a96"/><rect x="4" y="12" width="1" height="1" fill="#6d7a96"/><rect x="2" y="14" width="1" height="1" fill="#6d7a96"/><rect x="2" y="14" width="1" height="1" fill="#6d7a96"/><rect x="0" y="16" width="1" height="1" fill="#6d7a96"/><rect x="4" y="16" width="1" height="1" fill="#6d7a96"/></svg>
<svg style="left:26px;top:59px;" width="12" height="12" viewBox="0 0 12 12"><circle cx="6" cy="6" r="6" fill="#00539c"/><path d="M2.6 6L6 2.8V5H9.6V7H6V9.2Z" fill="#fff"/></svg>
<svg style="left:46px;top:64px;" width="6" height="4" viewBox="0 0 6 4"><path d="M0 0H6L3.0 3.5Z" fill="#1e1e1e"/></svg>
<svg style="left:60px;top:59px;" width="12" height="12" viewBox="0 0 12 12"><circle cx="6" cy="6" r="6" fill="#b3b8c4"/><path d="M9.4 6L6 2.8V5H2.4V7H6V9.2Z" fill="#d6dbe9"/></svg>
<div style="left:80px;top:55px;width:1px;height:20px;background:#8b92a6;"></div>
<svg style="left:89px;top:57px;" width="15" height="16" viewBox="0 0 15 16"><path d="M3 0.5V5.5M0.5 3H5.5M1.2 1.2L4.8 4.8M4.8 1.2L1.2 4.8" stroke="#e0a030" stroke-width="1"/>
<g shape-rendering="crispEdges"><path d="M6.5 2.5H11.5L13.5 4.5V11.5" fill="none" stroke="#2b2b2b" stroke-width="1"/>
<path d="M5.5 5.5H10.5L12.5 7.5V14.5H5.5Z" fill="#f4f6fb" stroke="#2b2b2b" stroke-width="1"/>
<path d="M10.5 5.5V7.5H12.5" fill="none" stroke="#2b2b2b" stroke-width="1"/>
<path d="M4 8.5H2.5V13.5H4" fill="none" stroke="#2b2b2b" stroke-width="1"/></g></svg>
<svg style="left:111.5px;top:64px;" width="6" height="4" viewBox="0 0 6 4"><path d="M0 0H6L3.0 3.5Z" fill="#1e1e1e"/></svg>
<svg style="left:124px;top:58px;" width="15" height="14" viewBox="0 0 15 14"><path d="M6.5 3.5H9.5L10.5 4.5H14V12.5H6.5Z" fill="#f0d9a8"/>
<path d="M0 13.5L2.2 8.6H12.6L13.8 13.5Z" fill="#e2a951"/><path d="M0 13.5V9.5H1.8Z" fill="#e2a951"/>
<path d="M1 5.8C1 2.6 3 1.8 5 1.8V0L8 2.8L5 5.6V3.8C3.6 3.8 2.6 4.2 2.4 5.8Z" fill="#1565b0"/></svg>
<svg style="left:147px;top:59px;" width="13" height="12" viewBox="0 0 13 12"><path d="M0 0H12.4V11.6H1.6L0 10Z" fill="#00539c"/><rect x="5" y="0" width="4.6" height="3.6" fill="#d6dbe9"/><rect x="6.2" y="0.6" width="1.6" height="2.4" fill="#00539c"/></svg>
<svg style="left:168px;top:58px;" width="15" height="14" viewBox="0 0 15 14"><path d="M6.6 0H14.8V7.8H6.6Z" fill="#00539c"/><rect x="9.8" y="0" width="3" height="2.4" fill="#d6dbe9"/><rect x="10.6" y="0.4" width="1" height="1.6" fill="#00539c"/>
<path d="M0 5.5H8.4V13.6H1.2L0 12.4Z" fill="#00539c" stroke="#d6dbe9" stroke-width="0.8"/><rect x="3.2" y="5.6" width="3" height="2.4" fill="#d6dbe9"/><rect x="4" y="6" width="1" height="1.6" fill="#00539c"/></svg>
<div style="left:190px;top:55px;width:1px;height:20px;background:#8b92a6;"></div>
<svg style="left:198.5px;top:57.6px;" width="13" height="14" viewBox="0 0 13 14"><g ><path d="M0.2 0.6V6.4H6L3.9 4.3C5.2 3.2 7.4 2.6 9 3.8C10.8 5.4 9.6 7.8 8.2 9.2L4.4 12.6L5.8 14L9.8 10.4C12.4 8 13.2 4.6 10.6 2.2C8 0 4.6 0.8 2.4 2.8Z" fill="#00539c"/></g></svg>
<svg style="left:220px;top:64px;" width="6" height="4" viewBox="0 0 6 4"><path d="M0 0H6L3.0 3.5Z" fill="#1e1e1e"/></svg>
<svg style="left:234px;top:57.6px;" width="13" height="14" viewBox="0 0 13 14"><g transform="translate(13,0) scale(-1,1)"><path d="M0.2 0.6V6.4H6L3.9 4.3C5.2 3.2 7.4 2.6 9 3.8C10.8 5.4 9.6 7.8 8.2 9.2L4.4 12.6L5.8 14L9.8 10.4C12.4 8 13.2 4.6 10.6 2.2C8 0 4.6 0.8 2.4 2.8Z" fill="#b3b8c4"/></g></svg>
<svg style="left:255px;top:64px;" width="6" height="4" viewBox="0 0 6 4"><path d="M0 0H6L3.0 3.5Z" fill="#9aa0ae"/></svg>
<div style="left:267.5px;top:55px;width:1px;height:20px;background:#8b92a6;"></div>
<svg style="left:280px;top:59px;" width="9" height="12" viewBox="0 0 9 12"><path d="M0 0L8.6 5.7L0 11.4Z" fill="#388a34"/></svg>
<svg style="left:437px;top:64px;" width="6" height="4" viewBox="0 0 6 4"><path d="M0 0H6L3.0 3.5Z" fill="#1e1e1e"/></svg>
<svg style="left:451.4px;top:57.6px;" width="13" height="15" viewBox="0 0 13 15"><path d="M6.4 3.2A4.7 4.7 0 1 0 11.1 7.9" fill="none" stroke="#b3b8c4" stroke-width="2.1"/><path d="M5.6 0L10 3.2L5.6 6.4Z" fill="#b3b8c4"/></svg>
<svg style="left:472px;top:64px;" width="6" height="4" viewBox="0 0 6 4"><path d="M0 0H6L3.0 3.5Z" fill="#9aa0ae"/></svg>
<svg style="left:539px;top:64px;" width="6" height="4" viewBox="0 0 6 4"><path d="M0 0H6L3.0 3.5Z" fill="#1e1e1e"/></svg>
<div style="left:555px;top:55px;width:1px;height:20px;background:#8b92a6;"></div>
<svg style="left:564px;top:58px;" width="13" height="14" viewBox="0 0 13 14"><path d="M3.5 6V0.5H11.5V13.5H9" fill="none" stroke="#a9afbf" stroke-width="1"/><path d="M3 8.5H0.8M0.8 8.5L2.4 7M0.8 8.5L2.4 10M4 11.5H9M9 11.5L7.4 10M9 11.5L7.4 13" stroke="#a9afbf" stroke-width="1" fill="none"/><rect x="9.5" y="10.5" width="2.6" height="2.6" fill="none" stroke="#a9afbf" stroke-width="0.8"/></svg>
<div style="left:585px;top:55px;width:1px;height:20px;background:#8b92a6;"></div>
<svg style="left:593px;top:57px;" width="16" height="16" viewBox="0 0 16 16"><path d="M3.2 1.6H8L9 0.6H15.4V11H3.2Z" fill="#e2a951"/><path d="M8.4 1.8H15.4V2.8H8.4Z" fill="#f0cf8e"/>
<circle cx="5.8" cy="10.4" r="2.6" fill="#e9eef8" stroke="#1565b0" stroke-width="1.4"/><path d="M3.8 12.4L1 15.2" stroke="#1565b0" stroke-width="1.8" stroke-linecap="round"/></svg>
<div style="left:616px;top:68px;width:6px;height:1.4px;background:#1e1e1e;"></div>
<svg style="left:616px;top:71px;" width="6" height="4" viewBox="0 0 6 4"><path d="M0 0H6L3.0 3.5Z" fill="#1e1e1e"/></svg>
<svg style="left:627px;top:56px;" width="6" height="18" viewBox="0 0 6 18"><rect x="0" y="0" width="1" height="1" fill="#6d7a96"/><rect x="4" y="0" width="1" height="1" fill="#6d7a96"/><rect x="2" y="2" width="1" height="1" fill="#6d7a96"/><rect x="2" y="2" width="1" height="1" fill="#6d7a96"/><rect x="0" y="4" width="1" height="1" fill="#6d7a96"/><rect x="4" y="4" width="1" height="1" fill="#6d7a96"/><rect x="2" y="6" width="1" height="1" fill="#6d7a96"/><rect x="2" y="6" width="1" height="1" fill="#6d7a96"/><rect x="0" y="8" width="1" height="1" fill="#6d7a96"/><rect x="4" y="8" width="1" height="1" fill="#6d7a96"/><rect x="2" y="10" width="1" height="1" fill="#6d7a96"/><rect x="2" y="10" width="1" height="1" fill="#6d7a96"/><rect x="0" y="12" width="1" height="1" fill="#6d7a96"/><rect x="4" y="12" width="1" height="1" fill="#6d7a96"/><rect x="2" y="14" width="1" height="1" fill="#6d7a96"/><rect x="2" y="14" width="1" height="1" fill="#6d7a96"/><rect x="0" y="16" width="1" height="1" fill="#6d7a96"/><rect x="4" y="16" width="1" height="1" fill="#6d7a96"/></svg>
<svg style="left:638px;top:59px;" width="15" height="12" viewBox="0 0 15 12"><path d="M0.6 0.4L4.6 3L0.6 5.6Z" fill="#388a34"/><path d="M4 1.6H14V10.8H4Z" fill="#3b3b3b"/><rect x="5.4" y="3.6" width="7.4" height="6" fill="#f6f6f6"/>
<path d="M6 5H7.4M8.4 5H12M6 6.8H7.4M8.4 6.8H12M6 8.6H7.4M8.4 8.6H12" stroke="#3b3b3b" stroke-width="1"/></svg>
<div style="left:660px;top:55px;width:1px;height:20px;background:#8b92a6;"></div>
<svg style="left:668px;top:57px;" width="16" height="16" viewBox="0 0 16 16"><rect x="1" y="1" width="1" height="14" fill="#a9afbf"/><rect x="3" y="4" width="12" height="2" fill="#a9afbf"/><rect x="3" y="10" width="9" height="2" fill="#a9afbf"/></svg>
<svg style="left:690px;top:57px;" width="16" height="16" viewBox="0 0 16 16"><rect x="14.4" y="1" width="1" height="14" fill="#a9afbf"/><rect x="1" y="4" width="12" height="2" fill="#a9afbf"/><rect x="4" y="10" width="9" height="2" fill="#a9afbf"/></svg>
<svg style="left:712px;top:57px;" width="16" height="16" viewBox="0 0 16 16"><rect x="1" y="1" width="14" height="1.8" fill="#a9afbf"/><rect x="4" y="4" width="2" height="11" fill="#a9afbf"/><rect x="10" y="4" width="2" height="6.5" fill="#a9afbf"/></svg>
<svg style="left:734px;top:57px;" width="16" height="16" viewBox="0 0 16 16"><rect x="1" y="14.2" width="14" height="1" fill="#a9afbf"/><rect x="4" y="1" width="2" height="12" fill="#a9afbf"/><rect x="10.4" y="4" width="2" height="9" fill="#a9afbf"/></svg>
<div style="left:756px;top:55px;width:1px;height:20px;background:#8b92a6;"></div>
<svg style="left:765px;top:57px;" width="14" height="16" viewBox="0 0 14 16"><rect x="1" y="4" width="12" height="2" fill="#a9afbf"/><rect x="2" y="9" width="10" height="2" fill="#a9afbf"/><rect x="6" y="1" width="2" height="1" fill="#a9afbf"/><rect x="6" y="7" width="2" height="1" fill="#a9afbf"/><rect x="6" y="13" width="2" height="1" fill="#a9afbf"/></svg>
<svg style="left:787px;top:57px;" width="14" height="16" viewBox="0 0 14 16"><rect x="4" y="2" width="2" height="11.6" fill="#a9afbf"/><rect x="9" y="3" width="2" height="10" fill="#a9afbf"/><rect x="1.4" y="7" width="1" height="2" fill="#a9afbf"/><rect x="7" y="7" width="1" height="2" fill="#a9afbf"/><rect x="12" y="7" width="1" height="2" fill="#a9afbf"/></svg>
<div style="left:808px;top:55px;width:1px;height:20px;background:#8b92a6;"></div>
<svg style="left:816px;top:57px;" width="16" height="16" viewBox="0 0 16 16"><rect x="1" y="6" width="1.6" height="4" fill="#a9afbf"/><rect x="4" y="2" width="2" height="11.6" fill="#a9afbf"/><rect x="10" y="2" width="2" height="11.6" fill="#a9afbf"/><rect x="13.4" y="6" width="1.6" height="4" fill="#a9afbf"/></svg>
<svg style="left:839px;top:57px;" width="14" height="16" viewBox="0 0 14 16"><rect x="5" y="1" width="4" height="1.6" fill="#a9afbf"/><rect x="1" y="4" width="12" height="2" fill="#a9afbf"/><rect x="4" y="7.4" width="6" height="1.6" fill="#a9afbf"/><rect x="1" y="10.4" width="12" height="2" fill="#a9afbf"/><rect x="5" y="13.4" width="4" height="1.6" fill="#a9afbf"/></svg>
<div style="left:860px;top:55px;width:1px;height:20px;background:#8b92a6;"></div>
<svg style="left:868px;top:57px;" width="16" height="16" viewBox="0 0 16 16"><rect x="1" y="2" width="2" height="10.8" fill="#a9afbf"/><rect x="13" y="2" width="2" height="10.8" fill="#a9afbf"/><path d="M8 4V11M5 5.6L11 9.4M11 5.6L5 9.4" stroke="#a9afbf" stroke-width="1.5"/></svg>
<svg style="left:891px;top:57px;" width="15" height="16" viewBox="0 0 15 16"><rect x="1" y="1" width="13" height="2" fill="#a9afbf"/><rect x="1" y="13" width="13" height="2" fill="#a9afbf"/><rect x="7" y="3" width="1" height="10" fill="#a9afbf"/><path d="M5.4 5.6L7.5 3.2L9.6 5.6ZM5.4 10.4L7.5 12.8L9.6 10.4Z" fill="#a9afbf"/></svg>
<svg style="left:912px;top:57px;" width="16" height="16" viewBox="0 0 16 16"><path d="M1 1H6L4.4 2.6L7 5.2L5.2 7L2.6 4.4L1 6ZM15 1V6L13.4 4.4L10.8 7L9 5.2L11.6 2.6L10 1ZM1 15V10L2.6 11.6L5.2 9L7 10.8L4.4 13.4L6 15ZM15 15H10L11.6 13.4L9 10.8L10.8 9L13.4 11.6L15 10Z" fill="#a9afbf"/></svg>
<div style="left:934px;top:55px;width:1px;height:20px;background:#8b92a6;"></div>
<svg style="left:945px;top:60px;" width="10" height="10" viewBox="0 0 10 10"><rect width="10" height="10" fill="#2b2b2b"/><rect x="1.2" y="1.2" width="1.6" height="1.6" fill="#f4f6fb"/><rect x="1.2" y="4.2" width="1.6" height="1.6" fill="#f4f6fb"/><rect x="1.2" y="7.2" width="1.6" height="1.6" fill="#f4f6fb"/><rect x="4.2" y="1.2" width="1.6" height="1.6" fill="#f4f6fb"/><rect x="4.2" y="4.2" width="1.6" height="1.6" fill="#f4f6fb"/><rect x="4.2" y="7.2" width="1.6" height="1.6" fill="#f4f6fb"/><rect x="7.2" y="1.2" width="1.6" height="1.6" fill="#f4f6fb"/><rect x="7.2" y="4.2" width="1.6" height="1.6" fill="#f4f6fb"/><rect x="7.2" y="7.2" width="1.6" height="1.6" fill="#f4f6fb"/></svg>
<div style="left:961px;top:53px;width:20px;height:22px;background:#fdf4bf;border:1px solid #e5c365;"></div>
<svg style="left:965px;top:57px;" width="15" height="16" viewBox="0 0 15 16"><path d="M12.2 1H14.4V15H0.4V12.8H12.2Z" fill="#2b2b3b"/><path d="M0.5 3.5H11" stroke="#2b2b3b" stroke-width="1" stroke-dasharray="1 1"/><path d="M2.5 0.5V11" stroke="#2b2b3b" stroke-width="1" stroke-dasharray="1 1"/></svg>
<div style="left:987px;top:68px;width:6px;height:1.4px;background:#1e1e1e;"></div>
<svg style="left:987px;top:71px;" width="6" height="4" viewBox="0 0 6 4"><path d="M0 0H6L3.0 3.5Z" fill="#1e1e1e"/></svg>
<svg style="left:712px;top:5px;" width="16" height="16" viewBox="0 0 16 16"><path d="M3.4 1.4H12A2.2 2.2 0 0 1 14.2 3.6V9.6A2.2 2.2 0 0 1 12 11.8H7.6L5 14.4V11.8H3.4A2.2 2.2 0 0 1 1.2 9.6V3.6A2.2 2.2 0 0 1 3.4 1.4Z" fill="none" stroke="#1e1e1e" stroke-width="1.5"/></svg>
<svg style="left:745px;top:6px;" width="14" height="14" viewBox="0 0 14 14"><path d="M1.6 1.6H12.4L7.6 7.4L8.6 12.6" fill="none" stroke="#1e1e1e" stroke-width="1.4"/><path d="M1.6 1.6L7.6 7.4" stroke="#1e1e1e" stroke-width="1.6"/></svg>
<svg style="left:953px;top:5px;" width="16" height="16" viewBox="0 0 16 16"><circle cx="10.4" cy="5.6" r="3" fill="none" stroke="#6a6a6a" stroke-width="1.9"/><path d="M8.2 8L2.6 13.2" stroke="#6a6a6a" stroke-width="2.6" stroke-linecap="round"/></svg>
<div style="left:986px;top:14.7px;width:9.2px;height:3.6px;background:#000;"></div>
<svg style="left:1020px;top:8px;" width="10" height="11" viewBox="0 0 10 11"><rect x="0.8" y="0.8" width="8" height="8.6" fill="none" stroke="#000" stroke-width="1.6"/><rect x="0" y="0.6" width="9.6" height="3" fill="#000"/></svg>
<svg style="left:1052px;top:10px;" width="12" height="9" viewBox="0 0 12 9"><path d="M1.4 0.8L10 7.8M10 0.8L1.4 7.8" stroke="#000" stroke-width="2"/></svg>
<svg style="left:1034.5px;top:40px;" width="5.5" height="3.6" viewBox="0 0 5.5 3.6"><path d="M0 0H5.5L2.75 3.1Z" fill="#1e1e1e"/></svg>
<svg style="left:194.0px;top:94px;" width="8" height="5" viewBox="0 0 8 5"><path d="M0 0.4H7.6L3.8 4.4Z" fill="#e8ecf4"/></svg>
<svg style="left:210.5px;top:91px;" width="8" height="12" viewBox="0 0 8 12"><path d="M2.4 0.6H6V7" fill="none" stroke="#e8ecf4" stroke-width="1.2"/><path d="M2.4 0.6V7" stroke="#e8ecf4" stroke-width="1"/><path d="M5.4 0.6V7" stroke="#e8ecf4" stroke-width="1.6"/><path d="M0.4 7.2H7.6" stroke="#e8ecf4" stroke-width="1.2"/><path d="M4 7.2V11.6" stroke="#e8ecf4" stroke-width="1.1"/></svg>
<svg style="left:226.5px;top:92px;" width="10" height="9" viewBox="0 0 10 9"><path d="M0.8 0.6L8.8 8.4M8.8 0.6L0.8 8.4" stroke="#e8ecf4" stroke-width="1.3"/></svg>
<svg style="left:994.5px;top:94px;" width="8" height="5" viewBox="0 0 8 5"><path d="M0 0.4H7.6L3.8 4.4Z" fill="#e8ecf4"/></svg>
<svg style="left:1011px;top:91px;" width="8" height="12" viewBox="0 0 8 12"><path d="M2.4 0.6H6V7" fill="none" stroke="#e8ecf4" stroke-width="1.2"/><path d="M2.4 0.6V7" stroke="#e8ecf4" stroke-width="1"/><path d="M5.4 0.6V7" stroke="#e8ecf4" stroke-width="1.6"/><path d="M0.4 7.2H7.6" stroke="#e8ecf4" stroke-width="1.2"/><path d="M4 7.2V11.6" stroke="#e8ecf4" stroke-width="1.1"/></svg>
<svg style="left:1027px;top:92px;" width="10" height="9" viewBox="0 0 10 9"><path d="M0.8 0.6L8.8 8.4M8.8 0.6L0.8 8.4" stroke="#e8ecf4" stroke-width="1.3"/></svg>
<svg style="left:994.5px;top:334.6px;" width="8" height="5" viewBox="0 0 8 5"><path d="M0 0.4H7.6L3.8 4.4Z" fill="#e8ecf4"/></svg>
<svg style="left:1011px;top:331.6px;" width="8" height="12" viewBox="0 0 8 12"><path d="M2.4 0.6H6V7" fill="none" stroke="#e8ecf4" stroke-width="1.2"/><path d="M2.4 0.6V7" stroke="#e8ecf4" stroke-width="1"/><path d="M5.4 0.6V7" stroke="#e8ecf4" stroke-width="1.6"/><path d="M0.4 7.2H7.6" stroke="#e8ecf4" stroke-width="1.2"/><path d="M4 7.2V11.6" stroke="#e8ecf4" stroke-width="1.1"/></svg>
<svg style="left:1027px;top:332.6px;" width="10" height="9" viewBox="0 0 10 9"><path d="M0.8 0.6L8.8 8.4M8.8 0.6L0.8 8.4" stroke="#e8ecf4" stroke-width="1.3"/></svg>
<svg style="left:478px;top:92px;" width="9" height="8" viewBox="0 0 9 8"><path d="M0 4H3.6" stroke="#5f5a22" stroke-width="1.1"/><path d="M3.8 0.6V7.4" stroke="#5f5a22" stroke-width="1.2"/><path d="M3.8 1.8H8.2V6H3.8" fill="none" stroke="#5f5a22" stroke-width="1"/><path d="M3.8 5.6H8.2" stroke="#5f5a22" stroke-width="1.6"/></svg>
<svg style="left:496px;top:91px;" width="10" height="9" viewBox="0 0 10 9"><path d="M1 0.8L9 8.2M9 0.8L1 8.2" stroke="#5f5a22" stroke-width="1.3"/></svg>
<svg style="left:736.8px;top:90px;" width="9" height="9" viewBox="0 0 9 9"><rect x="0" y="0" width="8.2" height="2" fill="#e8ecf4"/><path d="M0 3.8H8.2L4.1 8Z" fill="#e8ecf4"/></svg>
<svg style="left:213px;top:108px;" width="16" height="16" viewBox="0 0 16 16"><circle cx="10" cy="6.7" r="2.9" fill="none" stroke="#6d6d6d" stroke-width="1.8"/><path d="M7.8 9L2.8 14.2" stroke="#6d6d6d" stroke-width="2.6" stroke-linecap="round"/></svg>
<svg style="left:232.5px;top:116px;" width="5" height="3.4" viewBox="0 0 5 3.4"><path d="M0 0H5L2.5 2.9Z" fill="#717171"/></svg>
<svg style="left:26px;top:152px;overflow:visible;" width="17" height="16" viewBox="0 0 17 16"><path d="M3.6 0V13.4L6.8 10.6L9.2 15.2L11.6 14L9.4 9.8H13.8Z" fill="#3b3b3b" stroke="#fff" stroke-width="1.1"/></svg>
<svg style="left:26px;top:173px;overflow:visible;" width="17" height="16" viewBox="0 0 17 16"><rect x="2" y="4.5" width="13" height="8.5" fill="#c8c8c8" stroke="#000" stroke-width="1.2" rx="2"/></svg>
<svg style="left:26px;top:194px;overflow:visible;" width="17" height="16" viewBox="0 0 17 16"><g shape-rendering="crispEdges"><rect x="2.5" y="2.5" width="11" height="11" fill="#fff" stroke="#000" stroke-width="1.3" rx="0"/><path d="M4.8 4.8L11.2 11.2M11.2 4.8L4.8 11.2" fill="none" stroke="#000" stroke-width="2.4"/></g></svg>
<svg style="left:26px;top:215px;overflow:visible;" width="17" height="16" viewBox="0 0 17 16"><text x="-0.5" y="12.6" font-family="Liberation Sans,sans-serif" font-weight="bold" font-size="12" fill="#1e1e1e" textLength="13" lengthAdjust="spacingAndGlyphs">ab</text><rect x="14" y="2.2" width="1.1" height="12.4" fill="#000"/></svg>
<svg style="left:26px;top:236px;overflow:visible;" width="17" height="16" viewBox="0 0 17 16"><rect x="0.8" y="1.2" width="14.6" height="12.6" fill="#fff" stroke="#000" stroke-width="1.2" rx="0"/><rect x="0.8" y="4.2" width="14.6" height="1.2" fill="#000"/><rect x="9.6" y="1.2" width="1.2" height="12.6" fill="#000"/><rect x="2.6" y="6.8" width="5" height="1.2" fill="#000"/><rect x="2.6" y="9.2" width="5" height="1.2" fill="#000"/><rect x="2.6" y="11.4" width="5" height="1" fill="#000"/><path d="M11.6 2H14.4L13 3.8Z" fill="#000" stroke="none" stroke-width="1"/><path d="M11.8 8.6L13 7L14.2 8.6Z" fill="#000" stroke="none" stroke-width="1"/><path d="M11.8 10.6L13 12.2L14.2 10.6Z" fill="#000" stroke="none" stroke-width="1"/><rect x="10.8" y="9.3" width="4.4" height="0.8" fill="#000"/></svg>
<svg style="left:26px;top:257px;overflow:visible;" width="17" height="16" viewBox="0 0 17 16"><rect x="0.6" y="3.4" width="14.4" height="10" fill="#fff" stroke="#000" stroke-width="1.2" rx="0"/><rect x="9.4" y="3.4" width="1.2" height="10" fill="#000"/><rect x="2.4" y="6" width="5" height="1.2" fill="#000"/><rect x="2.4" y="9.4" width="5" height="1.2" fill="#000"/><rect x="10.6" y="8" width="4.4" height="1" fill="#000"/><path d="M11.6 6.6L12.8 5L14 6.6Z" fill="#000" stroke="none" stroke-width="1"/><path d="M11.6 10.2L12.8 11.8L14 10.2Z" fill="#000" stroke="none" stroke-width="1"/></svg>
<svg style="left:26px;top:278px;overflow:visible;" width="17" height="16" viewBox="0 0 17 16"><g shape-rendering="crispEdges"><path d="M2.6 3.6H0.8V15.2H15.4V3.6H13.8" fill="none" stroke="#000" stroke-width="1.2"/><text x="3" y="5.6" font-family="Liberation Sans,sans-serif" font-weight="bold" font-size="8" fill="#000" textLength="10.4" lengthAdjust="spacingAndGlyphs">xyz</text></g></svg>
<svg style="left:26px;top:299px;overflow:visible;" width="17" height="16" viewBox="0 0 17 16"><rect x="0.8" y="0.8" width="14.6" height="14" fill="#fff" stroke="#000" stroke-width="1.2" rx="0"/><path d="M4.6 13V6.2M4.6 9.4L2.6 8.4V5.6M4.6 10.6L6.6 9V4M4.6 6.4C4 4 5.2 3 5.2 3" fill="none" stroke="#000" stroke-width="1.3"/><circle cx="11.4" cy="4.8" r="1.6" fill="none" stroke="#1e1e1e" stroke-width="1.1"/><path d="M1 14.4L7.4 9.6H14.8V14.4Z" fill="#000" stroke="none" stroke-width="1"/><rect x="9.2" y="11" width="4" height="1.4" fill="#fff"/></svg>
<svg style="left:26px;top:320px;overflow:visible;" width="17" height="16" viewBox="0 0 17 16"><circle cx="7.5" cy="8" r="4.8" fill="#fff" stroke="#8a8a8a" stroke-width="1.1"/><circle cx="7.5" cy="8" r="2.2" fill="#1e1e1e"/></svg>
<svg style="left:26px;top:341px;overflow:visible;" width="17" height="16" viewBox="0 0 17 16"><text x="0.4" y="13.4" font-family="Liberation Serif,serif" font-style="italic" font-weight="bold" font-size="14" fill="#1e1e1e" textLength="15.6" lengthAdjust="spacingAndGlyphs">Aa</text></svg>
<svg style="left:26px;top:362px;overflow:visible;" width="17" height="16" viewBox="0 0 17 16"><rect x="0.8" y="3.6" width="13" height="8.2" fill="#fff" stroke="#000" stroke-width="1.2" rx="0"/><rect x="6.8" y="3.6" width="1.2" height="8.2" fill="#000"/><path d="M5.4 5.4V10L2.4 7.7Z" fill="#000" stroke="none" stroke-width="1"/><path d="M9.4 5.4V10L12.4 7.7Z" fill="#000" stroke="none" stroke-width="1"/></svg>
<svg style="left:26px;top:383px;overflow:visible;" width="17" height="16" viewBox="0 0 17 16"><rect x="3" y="1.4" width="8.6" height="12.6" fill="#fff" stroke="#000" stroke-width="1.2" rx="0"/><rect x="3" y="7.2" width="8.6" height="1.2" fill="#000"/><path d="M5 5.8H9.6L7.3 3.2Z" fill="#000" stroke="none" stroke-width="1"/><path d="M5 9.8H9.6L7.3 12.4Z" fill="#000" stroke="none" stroke-width="1"/></svg>
<svg style="left:26px;top:404px;overflow:visible;" width="17" height="16" viewBox="0 0 17 16"><g shape-rendering="crispEdges"><rect x="0.6" y="7.4" width="14.6" height="1.3" fill="#000"/><rect x="3.6" y="4.2" width="3.4" height="7.8" fill="#fff" stroke="#000" stroke-width="1.3" rx="1"/><rect x="14" y="7.4" width="1.2" height="3.2" fill="#000"/><rect x="1.6" y="5.8" width="1" height="4.6" fill="#000"/></g></svg>
<svg style="left:26px;top:425px;overflow:visible;" width="17" height="16" viewBox="0 0 17 16"><path d="M2.6 6.4H12.2L7.4 1.4Z" fill="#000" stroke="none" stroke-width="1"/><rect x="2.6" y="7.4" width="9.6" height="1.4" fill="#000"/><path d="M2.6 9.8H12.2L7.4 14.8Z" fill="#000" stroke="none" stroke-width="1"/></svg>
<svg style="left:26px;top:446px;overflow:visible;" width="17" height="16" viewBox="0 0 17 16"><g shape-rendering="crispEdges"><rect x="0.4" y="4.6" width="14.8" height="7.2" fill="#fff" stroke="#000" stroke-width="1.3" rx="0"/><rect x="1.8" y="6" width="2" height="4.4" fill="#000"/><rect x="4.6" y="6" width="2" height="4.4" fill="#000"/><rect x="7.4" y="6" width="2" height="4.4" fill="#000"/><rect x="10.2" y="6" width="1.2" height="4.4" fill="#000"/></g></svg>
<svg style="left:26px;top:467px;overflow:visible;" width="17" height="16" viewBox="0 0 17 16"><path d="M6.6 3.4H15.2V12.4H3.6Z" fill="#3b3b3b" stroke="none" stroke-width="1"/><rect x="2.4" y="4" width="3" height="1" fill="#000"/><rect x="1.6" y="6.4" width="3" height="1" fill="#000"/><rect x="0.8" y="8.8" width="3" height="1" fill="#000"/><rect x="0.2" y="11.2" width="3" height="1" fill="#000"/></svg>
<svg style="left:26px;top:488px;overflow:visible;" width="17" height="16" viewBox="0 0 17 16"><g shape-rendering="crispEdges"><rect x="0.4" y="1.0" width="3" height="2.2" fill="#000"/><rect x="5.4" y="1.4" width="2.2" height="1.4" fill="#000"/><rect x="9.2" y="1.4" width="2.2" height="1.4" fill="#000"/><rect x="13" y="1.4" width="1.6" height="1.4" fill="#000"/><rect x="0.4" y="4.6" width="3" height="2.2" fill="#000"/><rect x="5.4" y="5.0" width="2.2" height="1.4" fill="#000"/><rect x="9.2" y="5.0" width="2.2" height="1.4" fill="#000"/><rect x="13" y="5.0" width="1.6" height="1.4" fill="#000"/><rect x="0.4" y="8.2" width="3" height="2.2" fill="#000"/><rect x="5.4" y="8.6" width="2.2" height="1.4" fill="#000"/><rect x="9.2" y="8.6" width="2.2" height="1.4" fill="#000"/><rect x="0.4" y="11.8" width="3" height="2.2" fill="#000"/><rect x="5.4" y="12.200000000000001" width="2.2" height="1.4" fill="#000"/><rect x="9.2" y="12.200000000000001" width="2.2" height="1.4" fill="#000"/></g></svg>
<svg style="left:26px;top:509px;overflow:visible;" width="17" height="16" viewBox="0 0 17 16"><g shape-rendering="crispEdges"><rect x="0.8" y="1" width="4" height="1.6" fill="#000"/><rect x="2.2" y="1" width="1.4" height="14" fill="#000"/><rect x="6" y="3.2" width="1.4" height="11.6" fill="#000"/><rect x="6" y="6" width="3.4" height="1.3" fill="#000"/><rect x="6" y="9.6" width="3.4" height="1.3" fill="#000"/><rect x="6" y="13" width="3.4" height="1.3" fill="#000"/><rect x="10.4" y="9.4" width="4.6" height="1.6" fill="#000"/><rect x="10.4" y="12.8" width="4.6" height="1.6" fill="#000"/></g></svg>
<svg style="left:26px;top:530px;overflow:visible;" width="17" height="16" viewBox="0 0 17 16"><g shape-rendering="crispEdges"><path d="M0.4 14.4V3.2H5.2V5.2H6.2V3.2H10.6V5.2H11.6V3.2H16V14.4Z" fill="#c8c8c8" stroke="#000" stroke-width="1.2"/></g></svg>
<svg style="left:26px;top:551px;overflow:visible;" width="17" height="16" viewBox="0 0 17 16"><path d="M9.6 1L11 5.6L15.4 5L12 8L14.6 12.4L9.8 10.2L6.6 13.6L7 9L3.4 7L7.6 5.6Z" fill="#2b2b2b" stroke="none" stroke-width="1"/><rect x="0.6" y="5" width="2.4" height="0.9" fill="#000"/><rect x="0.6" y="7.4" width="2.4" height="0.9" fill="#000"/><rect x="0.6" y="9.8" width="2.4" height="0.9" fill="#000"/></svg>
<svg style="left:26px;top:572px;overflow:visible;" width="17" height="16" viewBox="0 0 17 16"><rect x="0" y="0.8" width="16.4" height="4.6" fill="#d0d0d0"/><text x="0.6" y="10.8" font-family="Liberation Sans,sans-serif" font-style="italic" font-weight="bold" font-size="10" fill="#1e1e1e" textLength="15" lengthAdjust="spacingAndGlyphs">2.0</text><rect x="0.4" y="12" width="15.6" height="1.2" fill="#000"/><rect x="0.4" y="14.4" width="15.6" height="0.8" fill="#9a9a9a"/></svg>
<svg style="left:26px;top:593px;overflow:visible;" width="17" height="16" viewBox="0 0 17 16"><rect x="0.6" y="1.4" width="14.8" height="4.2" fill="#fff" stroke="#000" stroke-width="1.2" rx="0"/><rect x="10.8" y="1.4" width="4.6" height="4.2" fill="#000"/><path d="M11.8 2.6H14.4L13.1 4.4Z" fill="#fff" stroke="none" stroke-width="1"/><text x="0" y="15.6" font-family="Liberation Sans,sans-serif" font-weight="bold" font-size="9" fill="#1e1e1e" textLength="16" lengthAdjust="spacingAndGlyphs">1/1/1</text></svg>
<svg style="left:26px;top:614px;overflow:visible;" width="17" height="16" viewBox="0 0 17 16"><g shape-rendering="crispEdges"><rect x="1.8" y="1.6" width="12" height="12.6" fill="#fff" stroke="#000" stroke-width="1.3" rx="0"/><rect x="1.8" y="1.6" width="12" height="2.6" fill="#000"/><rect x="1.8" y="7" width="12" height="1" fill="#000"/><rect x="1.8" y="10.2" width="12" height="1" fill="#000"/><rect x="5.4" y="4" width="1" height="10" fill="#000"/><rect x="9.4" y="4" width="1" height="10" fill="#000"/></g></svg>
<svg style="left:14.6px;top:136.4px;" width="8" height="8" viewBox="0 0 8 8"><path d="M7 0V7H0Z" fill="#1e1e1e"/></svg>
<svg style="left:229px;top:136px;" width="10" height="6" viewBox="0 0 10 6"><path d="M0.4 5.6L4.6 0.6L8.8 5.6Z" fill="#868999"/></svg>
<svg style="left:229px;top:619px;" width="10" height="6" viewBox="0 0 10 6"><path d="M0.4 0.4L4.6 5.4L8.8 0.4Z" fill="#868999"/></svg>
<svg style="left:759.6px;top:112.6px;" width="8" height="8" viewBox="0 0 8 8"><path d="M6.8 0V6.8H0Z" fill="#111"/></svg>
<svg style="left:774.5px;top:109.5px;" width="15" height="13" viewBox="0 0 15 13"><rect x="0.5" y="0.5" width="13.6" height="11.4" fill="#fff" stroke="#68217a" stroke-width="1"/><path d="M5.4 2V7.4M2.6 4.7H8.2" stroke="#1e1e1e" stroke-width="2.2"/><path d="M9.9 5.4V11M7.1 8.2H12.7" stroke="#1e1e1e" stroke-width="2.2"/><rect x="4.9" y="4.2" width="1" height="1" fill="#fff"/><rect x="9.4" y="7.7" width="1" height="1" fill="#fff"/></svg>
<svg style="left:778.6px;top:130.6px;" width="8" height="8" viewBox="0 0 8 8"><path d="M6.8 0V6.8H0Z" fill="#111"/></svg>
<svg style="left:794px;top:128.3px;" width="15" height="11" viewBox="0 0 15 11"><path d="M3.2 9.6V0.6H8.2L9.6 2H13.2V9.6Z" fill="#fff" stroke="#dcb67a" stroke-width="1"/><path d="M0.2 10.5L3 5.2H12.4L10 10.5Z" fill="#dcb67a"/></svg>
<svg style="left:797.6px;top:148.6px;" width="8" height="8" viewBox="0 0 8 8"><path d="M6.8 0V6.8H0Z" fill="#111"/></svg>
<svg style="left:813px;top:146px;" width="15" height="11" viewBox="0 0 15 11"><path d="M3.2 9.6V0.6H8.2L9.6 2H13.2V9.6Z" fill="#fff" stroke="#dcb67a" stroke-width="1"/><path d="M0.2 10.5L3 5.2H12.4L10 10.5Z" fill="#dcb67a"/></svg>
<svg style="left:832px;top:163.5px;" width="14" height="12" viewBox="0 0 14 12"><rect x="0.6" y="0.6" width="12.6" height="10.8" fill="#fff" stroke="#2b2b2b" stroke-width="1.2"/><rect x="0.6" y="0.6" width="12.6" height="2.4" fill="#2b2b2b"/><path d="M2.6 5.6H4.6M2.6 8.6H4.6" stroke="#2b2b2b" stroke-width="1.2"/><rect x="6.3" y="4.8" width="5" height="1.8" fill="none" stroke="#2b2b2b" stroke-width="1"/><rect x="6.3" y="7.8" width="5" height="1.8" fill="none" stroke="#2b2b2b" stroke-width="1"/></svg>
<svg style="left:799px;top:184.6px;" width="6" height="9" viewBox="0 0 6 9"><path d="M0.6 0.8V8L4.8 4.4Z" fill="#fff" stroke="#1e1e1e" stroke-width="1"/></svg>
<svg style="left:813.8px;top:182px;" width="14" height="11" viewBox="0 0 14 11"><path d="M0 1.6H7.4L8.8 0H13.2V10.6H0Z" fill="#dcb67a"/></svg>
<svg style="left:799px;top:202.6px;" width="6" height="9" viewBox="0 0 6 9"><path d="M0.6 0.8V8L4.8 4.4Z" fill="#fff" stroke="#1e1e1e" stroke-width="1"/></svg>
<svg style="left:813.8px;top:200px;" width="14" height="11" viewBox="0 0 14 11"><path d="M0 1.6H7.4L8.8 0H13.2V10.6H0Z" fill="#dcb67a"/></svg>
<svg style="left:760.4px;top:286px;" width="7" height="10" viewBox="0 0 7 10"><path d="M6.4 0V9.4L0.2 4.7Z" fill="#868999"/></svg>
<svg style="left:1031.6px;top:286px;" width="7" height="10" viewBox="0 0 7 10"><path d="M0.2 0V9.4L6.4 4.7Z" fill="#868999"/></svg>
<svg style="left:762px;top:378px;" width="15" height="15" viewBox="0 0 15 15"><rect x="0.8" y="0.8" width="4.4" height="4.4" fill="#fff" stroke="#2b2b2b" stroke-width="1.4"/><rect x="0.8" y="8.8" width="4.4" height="4.4" fill="#fff" stroke="#2b2b2b" stroke-width="1.4"/><path d="M7 1H13.6M8 3.4H12.4M8 5.6H13.6M7 9H13.6M8 11.4H12.4M8 13.6H13.6" stroke="#2b2b2b" stroke-width="1.2" stroke-dasharray="2 0.8"/></svg>
<div style="left:781px;top:374px;width:21px;height:20px;background:#fdf4bf;border:1px solid #e5c365;"></div>
<svg style="left:784px;top:377px;" width="17" height="16" viewBox="0 0 17 16"><rect x="0.4" y="0.4" width="8" height="6.6" fill="#3b3b3b"/><text x="1.2" y="6.4" font-family="Liberation Sans,sans-serif" font-weight="bold" font-size="7.5" fill="#fff">A</text><text x="1" y="15" font-family="Liberation Sans,sans-serif" font-weight="bold" font-size="9" fill="#2b2b2b">Z</text><path d="M12.4 1V10" stroke="#1565b0" stroke-width="2"/><path d="M8.8 8.6H16L12.4 13.6Z" fill="#1565b0"/></svg>
<div style="left:807px;top:376px;width:1px;height:19px;background:#8e9bbc;"></div>
<div style="left:810px;top:374px;width:21px;height:20px;background:#fdf4bf;border:1px solid #e5c365;"></div>
<svg style="left:813px;top:377px;" width="17" height="16" viewBox="0 0 17 16"><path d="M5.4 1H11.4L14.4 4V13.4H5.4Z" fill="#f6f6f6" stroke="#3b3b3b" stroke-width="1.2"/><path d="M11.2 1V4.2H14.4" fill="none" stroke="#3b3b3b" stroke-width="1"/><path d="M3.6 7V14.6" stroke="#2b2b2b" stroke-width="2.2"/><path d="M1 5.4V8.4H6.2V5.4" fill="none" stroke="#2b2b2b" stroke-width="1.6"/></svg>
<svg style="left:838px;top:377px;" width="14" height="16" viewBox="0 0 14 16"><path d="M8.4 0.6L12.2 0.6L7.8 6H11.4L2.6 14.8L5.6 8.2H2.2Z" fill="#ffe738" stroke="#2b2b2b" stroke-width="1.1" stroke-linejoin="round"/></svg>
<svg style="left:859px;top:378px;" width="16" height="15" viewBox="0 0 16 15"><rect x="0.6" y="0.6" width="14" height="10" fill="#fff" stroke="#1c2a4d" stroke-width="1.2"/><rect x="0.6" y="0.6" width="14" height="3.2" fill="#1c2a4d"/><path d="M3 6V10.4M5.4 7V10.4M11.4 5V10.4M9 7.4V10.4" stroke="#1c2a4d" stroke-width="1.3"/><path d="M6.2 7.8V13.6L7.8 12.2L9 14.6L10 14L8.8 11.8H10.8Z" fill="#2b2b2b" stroke="#fff" stroke-width="0.5"/><path d="M13 0L15.6 0.2L14 3" fill="none" stroke="#1c2a4d" stroke-width="1"/></svg>
<div style="left:882px;top:376px;width:1px;height:19px;background:#8e9bbc;"></div>
<svg style="left:890px;top:378px;" width="13" height="13" viewBox="0 0 13 13"><path d="M8.4 0.6A3.6 3.6 0 0 0 5 5.6L0.6 10.2L2.6 12.2L7.2 7.6A3.6 3.6 0 0 0 12 3.4L9.6 5.6L7.4 5L7 2.8L9.4 0.8Z" fill="#a0a5b2"/></svg>
<svg style="left:1033.5px;top:359px;" width="6" height="4" viewBox="0 0 6 4"><path d="M0 0H6L3.0 3.5Z" fill="#1e1e1e"/></svg>
<svg style="left:1029px;top:405px;" width="10" height="6" viewBox="0 0 10 6"><path d="M0.4 5.6L4.8 0.4L9.2 5.6Z" fill="#868999"/></svg>
<svg style="left:1029px;top:609.8px;" width="10" height="6" viewBox="0 0 10 6"><path d="M0.4 0.4L4.8 5.6L9.2 0.4Z" fill="#868999"/></svg>
<span style="left:679.02px;top:588.29px;font-size:11px;line-height:15px;color:#9a9a9a;font-family:'Liberation Sans',sans-serif;transform-origin:0 0;transform:scaleX(1.2778);">...</span>
<div style="left:609.7px;top:608.6px;width:16.5px;height:16px;background:#f0f0f0;"></div>
<div style="left:609.7px;top:608.6px;width:0.8px;height:16px;background:#c8c8c8;"></div>
<div style="left:609.7px;top:616.2px;width:16.5px;height:0.8px;background:#c8c8c8;"></div>
<svg style="left:614.7px;top:611.0px;" width="7" height="4" viewBox="0 0 7 4"><path d="M0.2 3.6L3.4 0.2L6.6 3.6Z" fill="#5c5c5c"/></svg>
<svg style="left:614.7px;top:618.4px;" width="7" height="4" viewBox="0 0 7 4"><path d="M0.2 0.2L3.4 3.6L6.6 0.2Z" fill="#5c5c5c"/></svg>
<div style="left:678.0px;top:608.6px;width:16.5px;height:16px;background:#f0f0f0;"></div>
<div style="left:678.0px;top:608.6px;width:0.8px;height:16px;background:#c8c8c8;"></div>
<div style="left:678.0px;top:616.2px;width:16.5px;height:0.8px;background:#c8c8c8;"></div>
<svg style="left:683.0px;top:611.0px;" width="7" height="4" viewBox="0 0 7 4"><path d="M0.2 3.6L3.4 0.2L6.6 3.6Z" fill="#5c5c5c"/></svg>
<svg style="left:683.0px;top:618.4px;" width="7" height="4" viewBox="0 0 7 4"><path d="M0.2 0.2L3.4 3.6L6.6 0.2Z" fill="#5c5c5c"/></svg>
<svg style="left:734px;top:667px;" width="16" height="15" viewBox="0 0 16 15"><path d="M0.6 4.4H6M3.4 1.2V7" stroke="#fff" stroke-width="1"/><rect x="3.9" y="4.9" width="10.2" height="9.2" fill="none" stroke="#fff" stroke-width="1" stroke-dasharray="1 1"/></svg>
<svg style="left:893.5px;top:667px;" width="16" height="15" viewBox="0 0 16 15"><rect x="5.4" y="4.9" width="9.2" height="9.2" fill="none" stroke="#fff" stroke-width="1" stroke-dasharray="1 1"/><path d="M6 2.4H13.6M11.6 0.6L13.6 2.4L11.6 4.2M14.6 0.4V4.4" fill="none" stroke="#fff" stroke-width="0.9"/><path d="M2.4 6V13M0.6 11L2.4 13L4.2 11M0.4 14.2H4.4" fill="none" stroke="#fff" stroke-width="0.9"/></svg>
<svg style="left:1063px;top:674px;" width="8" height="8" viewBox="0 0 8 8"><rect x="6" y="0" width="1" height="1" fill="#8cc4ea"/><rect x="4" y="2" width="1" height="1" fill="#8cc4ea"/><rect x="6" y="2" width="1" height="1" fill="#8cc4ea"/><rect x="2" y="4" width="1" height="1" fill="#8cc4ea"/><rect x="4" y="4" width="1" height="1" fill="#8cc4ea"/><rect x="6" y="4" width="1" height="1" fill="#8cc4ea"/><rect x="0" y="6" width="1" height="1" fill="#8cc4ea"/><rect x="2" y="6" width="1" height="1" fill="#8cc4ea"/><rect x="4" y="6" width="1" height="1" fill="#8cc4ea"/><rect x="6" y="6" width="1" height="1" fill="#8cc4ea"/></svg>
</div></body></html>
